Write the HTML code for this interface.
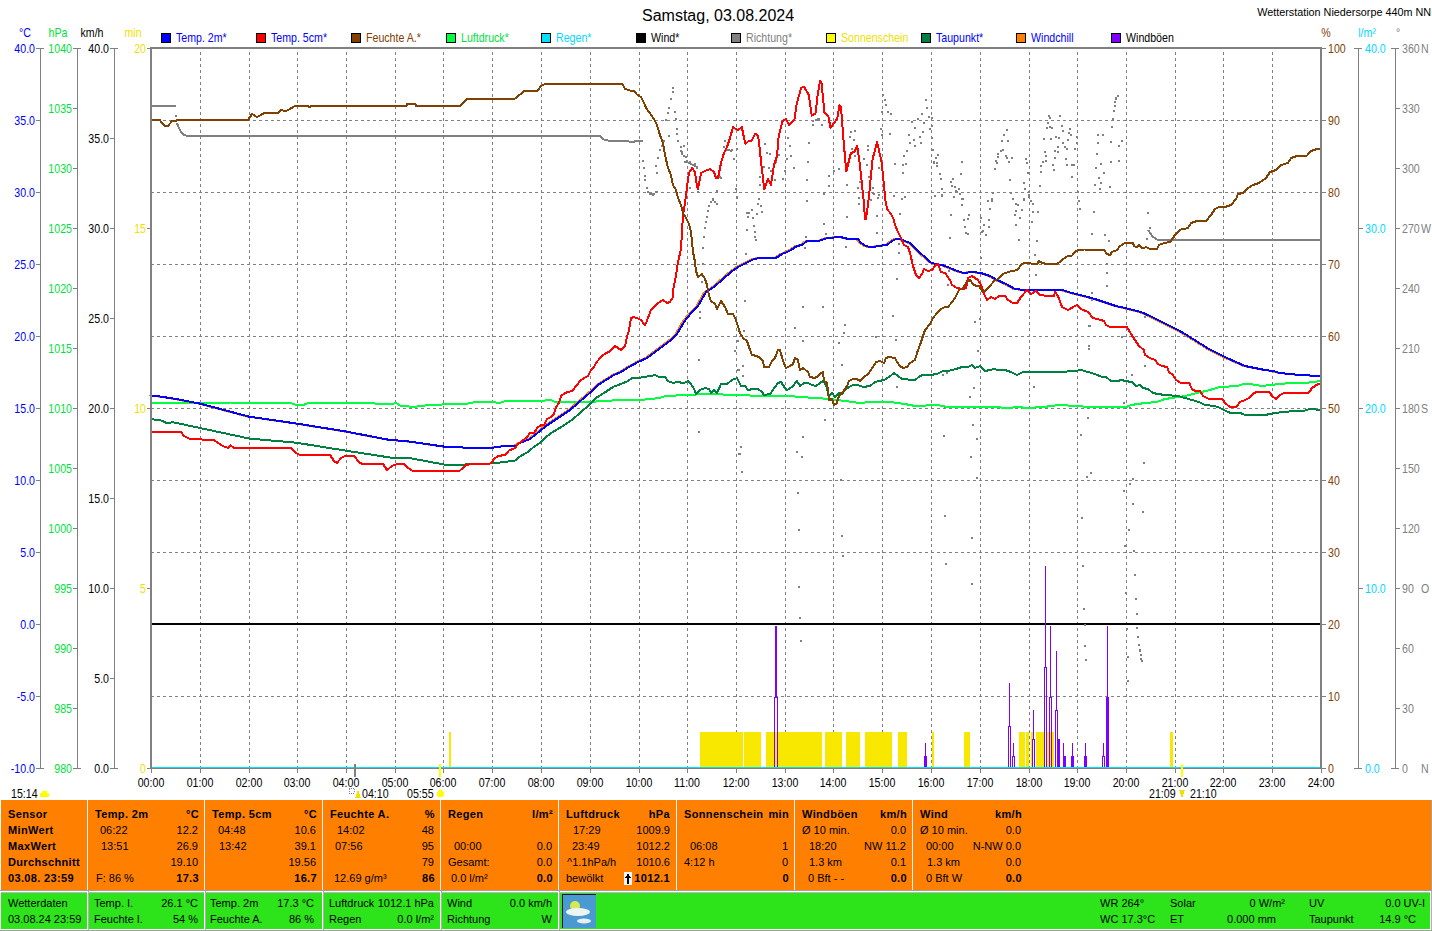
<!DOCTYPE html><html><head><meta charset="utf-8"><style>html,body{margin:0;padding:0;background:#fff;overflow:hidden}svg{display:block}text{font-family:"Liberation Sans", sans-serif;white-space:pre}</style></head><body>
<svg width="1432" height="931" viewBox="0 0 1432 931" shape-rendering="crispEdges">
<rect x="0" y="0" width="1432" height="931" fill="#fff"/>
<text x="642" y="21" font-size="16" fill="#000" text-anchor="start" font-weight="normal">Samstag, 03.08.2024</text>
<text x="1431" y="16" font-size="10.8" fill="#000" text-anchor="end" font-weight="normal">Wetterstation Niedersorpe 440m NN</text>
<rect x="161.5" y="33.5" width="9" height="9" fill="#0000ff" stroke="#000" stroke-width="1"/>
<text transform="translate(176,42) scale(0.85,1.0)" font-size="12.5" fill="#0000ff" text-anchor="start" font-weight="normal">Temp. 2m*</text>
<rect x="256.5" y="33.5" width="9" height="9" fill="#ff0000" stroke="#000" stroke-width="1"/>
<text transform="translate(271,42) scale(0.85,1.0)" font-size="12.5" fill="#0000ff" text-anchor="start" font-weight="normal">Temp. 5cm*</text>
<rect x="351.5" y="33.5" width="9" height="9" fill="#804000" stroke="#000" stroke-width="1"/>
<text transform="translate(366,42) scale(0.85,1.0)" font-size="12.5" fill="#804000" text-anchor="start" font-weight="normal">Feuchte A.*</text>
<rect x="446.5" y="33.5" width="9" height="9" fill="#00ff40" stroke="#000" stroke-width="1"/>
<text transform="translate(461,42) scale(0.85,1.0)" font-size="12.5" fill="#00e040" text-anchor="start" font-weight="normal">Luftdruck*</text>
<rect x="541.5" y="33.5" width="9" height="9" fill="#00e0ff" stroke="#000" stroke-width="1"/>
<text transform="translate(556,42) scale(0.85,1.0)" font-size="12.5" fill="#00d8ff" text-anchor="start" font-weight="normal">Regen*</text>
<rect x="636.5" y="33.5" width="9" height="9" fill="#000000" stroke="#000" stroke-width="1"/>
<text transform="translate(651,42) scale(0.85,1.0)" font-size="12.5" fill="#000000" text-anchor="start" font-weight="normal">Wind*</text>
<rect x="731.5" y="33.5" width="9" height="9" fill="#808080" stroke="#000" stroke-width="1"/>
<text transform="translate(746,42) scale(0.85,1.0)" font-size="12.5" fill="#808080" text-anchor="start" font-weight="normal">Richtung*</text>
<rect x="826.5" y="33.5" width="9" height="9" fill="#ffff00" stroke="#000" stroke-width="1"/>
<text transform="translate(841,42) scale(0.85,1.0)" font-size="12.5" fill="#f0e000" text-anchor="start" font-weight="normal">Sonnenschein</text>
<rect x="921.5" y="33.5" width="9" height="9" fill="#008040" stroke="#000" stroke-width="1"/>
<text transform="translate(936,42) scale(0.85,1.0)" font-size="12.5" fill="#0000ff" text-anchor="start" font-weight="normal">Taupunkt*</text>
<rect x="1016.5" y="33.5" width="9" height="9" fill="#ff8000" stroke="#000" stroke-width="1"/>
<text transform="translate(1031,42) scale(0.85,1.0)" font-size="12.5" fill="#0000ff" text-anchor="start" font-weight="normal">Windchill</text>
<rect x="1111.5" y="33.5" width="9" height="9" fill="#8000ff" stroke="#000" stroke-width="1"/>
<text transform="translate(1126,42) scale(0.85,1.0)" font-size="12.5" fill="#000000" text-anchor="start" font-weight="normal">Windböen</text>
<text transform="translate(25,37) scale(0.85,1.0)" font-size="12.5" fill="#0000ff" text-anchor="middle" font-weight="normal">°C</text>
<text transform="translate(58,37) scale(0.85,1.0)" font-size="12.5" fill="#00e040" text-anchor="middle" font-weight="normal">hPa</text>
<text transform="translate(92,37) scale(0.85,1.0)" font-size="12.5" fill="#000" text-anchor="middle" font-weight="normal">km/h</text>
<text transform="translate(133,37) scale(0.85,1.0)" font-size="12.5" fill="#f0e000" text-anchor="middle" font-weight="normal">min</text>
<text transform="translate(1326,37) scale(0.85,1.0)" font-size="12.5" fill="#804000" text-anchor="middle" font-weight="normal">%</text>
<text transform="translate(1367,37) scale(0.85,1.0)" font-size="12.5" fill="#00d8ff" text-anchor="middle" font-weight="normal">l/m²</text>
<text transform="translate(1398,37) scale(0.85,1.0)" font-size="12.5" fill="#808080" text-anchor="middle" font-weight="normal">°</text>
<rect x="40" y="48" width="1" height="721" fill="#808080"/>
<rect x="77" y="48" width="1" height="721" fill="#808080"/>
<rect x="114" y="48" width="1" height="721" fill="#808080"/>
<rect x="1358" y="48" width="1" height="721" fill="#808080"/>
<rect x="1395" y="48" width="1" height="721" fill="#808080"/>
<rect x="36" y="48" width="8" height="1" fill="#808080"/>
<text transform="translate(35,53) scale(0.85,1.0)" font-size="12.5" fill="#0000ff" text-anchor="end" font-weight="normal">40.0</text>
<rect x="36" y="120" width="4" height="1" fill="#808080"/>
<text transform="translate(35,125) scale(0.85,1.0)" font-size="12.5" fill="#0000ff" text-anchor="end" font-weight="normal">35.0</text>
<rect x="36" y="192" width="4" height="1" fill="#808080"/>
<text transform="translate(35,197) scale(0.85,1.0)" font-size="12.5" fill="#0000ff" text-anchor="end" font-weight="normal">30.0</text>
<rect x="36" y="264" width="4" height="1" fill="#808080"/>
<text transform="translate(35,269) scale(0.85,1.0)" font-size="12.5" fill="#0000ff" text-anchor="end" font-weight="normal">25.0</text>
<rect x="36" y="336" width="4" height="1" fill="#808080"/>
<text transform="translate(35,341) scale(0.85,1.0)" font-size="12.5" fill="#0000ff" text-anchor="end" font-weight="normal">20.0</text>
<rect x="36" y="408" width="4" height="1" fill="#808080"/>
<text transform="translate(35,413) scale(0.85,1.0)" font-size="12.5" fill="#0000ff" text-anchor="end" font-weight="normal">15.0</text>
<rect x="36" y="480" width="4" height="1" fill="#808080"/>
<text transform="translate(35,485) scale(0.85,1.0)" font-size="12.5" fill="#0000ff" text-anchor="end" font-weight="normal">10.0</text>
<rect x="36" y="552" width="4" height="1" fill="#808080"/>
<text transform="translate(35,557) scale(0.85,1.0)" font-size="12.5" fill="#0000ff" text-anchor="end" font-weight="normal">5.0</text>
<rect x="36" y="624" width="4" height="1" fill="#808080"/>
<text transform="translate(35,629) scale(0.85,1.0)" font-size="12.5" fill="#0000ff" text-anchor="end" font-weight="normal">0.0</text>
<rect x="36" y="696" width="4" height="1" fill="#808080"/>
<text transform="translate(35,701) scale(0.85,1.0)" font-size="12.5" fill="#0000ff" text-anchor="end" font-weight="normal">-5.0</text>
<rect x="36" y="768" width="8" height="1" fill="#808080"/>
<text transform="translate(35,773) scale(0.85,1.0)" font-size="12.5" fill="#0000ff" text-anchor="end" font-weight="normal">-10.0</text>
<rect x="73" y="48" width="8" height="1" fill="#808080"/>
<text transform="translate(72,53) scale(0.85,1.0)" font-size="12.5" fill="#00e040" text-anchor="end" font-weight="normal">1040</text>
<rect x="73" y="108" width="4" height="1" fill="#808080"/>
<text transform="translate(72,113) scale(0.85,1.0)" font-size="12.5" fill="#00e040" text-anchor="end" font-weight="normal">1035</text>
<rect x="73" y="168" width="4" height="1" fill="#808080"/>
<text transform="translate(72,173) scale(0.85,1.0)" font-size="12.5" fill="#00e040" text-anchor="end" font-weight="normal">1030</text>
<rect x="73" y="228" width="4" height="1" fill="#808080"/>
<text transform="translate(72,233) scale(0.85,1.0)" font-size="12.5" fill="#00e040" text-anchor="end" font-weight="normal">1025</text>
<rect x="73" y="288" width="4" height="1" fill="#808080"/>
<text transform="translate(72,293) scale(0.85,1.0)" font-size="12.5" fill="#00e040" text-anchor="end" font-weight="normal">1020</text>
<rect x="73" y="348" width="4" height="1" fill="#808080"/>
<text transform="translate(72,353) scale(0.85,1.0)" font-size="12.5" fill="#00e040" text-anchor="end" font-weight="normal">1015</text>
<rect x="73" y="408" width="4" height="1" fill="#808080"/>
<text transform="translate(72,413) scale(0.85,1.0)" font-size="12.5" fill="#00e040" text-anchor="end" font-weight="normal">1010</text>
<rect x="73" y="468" width="4" height="1" fill="#808080"/>
<text transform="translate(72,473) scale(0.85,1.0)" font-size="12.5" fill="#00e040" text-anchor="end" font-weight="normal">1005</text>
<rect x="73" y="528" width="4" height="1" fill="#808080"/>
<text transform="translate(72,533) scale(0.85,1.0)" font-size="12.5" fill="#00e040" text-anchor="end" font-weight="normal">1000</text>
<rect x="73" y="588" width="4" height="1" fill="#808080"/>
<text transform="translate(72,593) scale(0.85,1.0)" font-size="12.5" fill="#00e040" text-anchor="end" font-weight="normal">995</text>
<rect x="73" y="648" width="4" height="1" fill="#808080"/>
<text transform="translate(72,653) scale(0.85,1.0)" font-size="12.5" fill="#00e040" text-anchor="end" font-weight="normal">990</text>
<rect x="73" y="708" width="4" height="1" fill="#808080"/>
<text transform="translate(72,713) scale(0.85,1.0)" font-size="12.5" fill="#00e040" text-anchor="end" font-weight="normal">985</text>
<rect x="73" y="768" width="8" height="1" fill="#808080"/>
<text transform="translate(72,773) scale(0.85,1.0)" font-size="12.5" fill="#00e040" text-anchor="end" font-weight="normal">980</text>
<rect x="110" y="48" width="8" height="1" fill="#808080"/>
<text transform="translate(109,53) scale(0.85,1.0)" font-size="12.5" fill="#000" text-anchor="end" font-weight="normal">40.0</text>
<rect x="110" y="138" width="4" height="1" fill="#808080"/>
<text transform="translate(109,143) scale(0.85,1.0)" font-size="12.5" fill="#000" text-anchor="end" font-weight="normal">35.0</text>
<rect x="110" y="228" width="4" height="1" fill="#808080"/>
<text transform="translate(109,233) scale(0.85,1.0)" font-size="12.5" fill="#000" text-anchor="end" font-weight="normal">30.0</text>
<rect x="110" y="318" width="4" height="1" fill="#808080"/>
<text transform="translate(109,323) scale(0.85,1.0)" font-size="12.5" fill="#000" text-anchor="end" font-weight="normal">25.0</text>
<rect x="110" y="408" width="4" height="1" fill="#808080"/>
<text transform="translate(109,413) scale(0.85,1.0)" font-size="12.5" fill="#000" text-anchor="end" font-weight="normal">20.0</text>
<rect x="110" y="498" width="4" height="1" fill="#808080"/>
<text transform="translate(109,503) scale(0.85,1.0)" font-size="12.5" fill="#000" text-anchor="end" font-weight="normal">15.0</text>
<rect x="110" y="588" width="4" height="1" fill="#808080"/>
<text transform="translate(109,593) scale(0.85,1.0)" font-size="12.5" fill="#000" text-anchor="end" font-weight="normal">10.0</text>
<rect x="110" y="678" width="4" height="1" fill="#808080"/>
<text transform="translate(109,683) scale(0.85,1.0)" font-size="12.5" fill="#000" text-anchor="end" font-weight="normal">5.0</text>
<rect x="110" y="768" width="8" height="1" fill="#808080"/>
<text transform="translate(109,773) scale(0.85,1.0)" font-size="12.5" fill="#000" text-anchor="end" font-weight="normal">0.0</text>
<rect x="147" y="48" width="4" height="1" fill="#808080"/>
<text transform="translate(146,53) scale(0.85,1.0)" font-size="12.5" fill="#f0e000" text-anchor="end" font-weight="normal">20</text>
<rect x="147" y="228" width="4" height="1" fill="#808080"/>
<text transform="translate(146,233) scale(0.85,1.0)" font-size="12.5" fill="#f0e000" text-anchor="end" font-weight="normal">15</text>
<rect x="147" y="408" width="4" height="1" fill="#808080"/>
<text transform="translate(146,413) scale(0.85,1.0)" font-size="12.5" fill="#f0e000" text-anchor="end" font-weight="normal">10</text>
<rect x="147" y="588" width="4" height="1" fill="#808080"/>
<text transform="translate(146,593) scale(0.85,1.0)" font-size="12.5" fill="#f0e000" text-anchor="end" font-weight="normal">5</text>
<rect x="147" y="768" width="4" height="1" fill="#808080"/>
<text transform="translate(146,773) scale(0.85,1.0)" font-size="12.5" fill="#f0e000" text-anchor="end" font-weight="normal">0</text>
<rect x="1321" y="48" width="5" height="1" fill="#808080"/>
<text transform="translate(1328,53) scale(0.85,1.0)" font-size="12.5" fill="#804000" text-anchor="start" font-weight="normal">100</text>
<rect x="1321" y="120" width="5" height="1" fill="#808080"/>
<text transform="translate(1328,125) scale(0.85,1.0)" font-size="12.5" fill="#804000" text-anchor="start" font-weight="normal">90</text>
<rect x="1321" y="192" width="5" height="1" fill="#808080"/>
<text transform="translate(1328,197) scale(0.85,1.0)" font-size="12.5" fill="#804000" text-anchor="start" font-weight="normal">80</text>
<rect x="1321" y="264" width="5" height="1" fill="#808080"/>
<text transform="translate(1328,269) scale(0.85,1.0)" font-size="12.5" fill="#804000" text-anchor="start" font-weight="normal">70</text>
<rect x="1321" y="336" width="5" height="1" fill="#808080"/>
<text transform="translate(1328,341) scale(0.85,1.0)" font-size="12.5" fill="#804000" text-anchor="start" font-weight="normal">60</text>
<rect x="1321" y="408" width="5" height="1" fill="#808080"/>
<text transform="translate(1328,413) scale(0.85,1.0)" font-size="12.5" fill="#804000" text-anchor="start" font-weight="normal">50</text>
<rect x="1321" y="480" width="5" height="1" fill="#808080"/>
<text transform="translate(1328,485) scale(0.85,1.0)" font-size="12.5" fill="#804000" text-anchor="start" font-weight="normal">40</text>
<rect x="1321" y="552" width="5" height="1" fill="#808080"/>
<text transform="translate(1328,557) scale(0.85,1.0)" font-size="12.5" fill="#804000" text-anchor="start" font-weight="normal">30</text>
<rect x="1321" y="624" width="5" height="1" fill="#808080"/>
<text transform="translate(1328,629) scale(0.85,1.0)" font-size="12.5" fill="#804000" text-anchor="start" font-weight="normal">20</text>
<rect x="1321" y="696" width="5" height="1" fill="#808080"/>
<text transform="translate(1328,701) scale(0.85,1.0)" font-size="12.5" fill="#804000" text-anchor="start" font-weight="normal">10</text>
<rect x="1321" y="768" width="5" height="1" fill="#808080"/>
<text transform="translate(1328,773) scale(0.85,1.0)" font-size="12.5" fill="#804000" text-anchor="start" font-weight="normal">0</text>
<rect x="1354" y="48" width="8" height="1" fill="#808080"/>
<text transform="translate(1365,53) scale(0.85,1.0)" font-size="12.5" fill="#00d8ff" text-anchor="start" font-weight="normal">40.0</text>
<rect x="1359" y="228" width="4" height="1" fill="#808080"/>
<text transform="translate(1365,233) scale(0.85,1.0)" font-size="12.5" fill="#00d8ff" text-anchor="start" font-weight="normal">30.0</text>
<rect x="1359" y="408" width="4" height="1" fill="#808080"/>
<text transform="translate(1365,413) scale(0.85,1.0)" font-size="12.5" fill="#00d8ff" text-anchor="start" font-weight="normal">20.0</text>
<rect x="1359" y="588" width="4" height="1" fill="#808080"/>
<text transform="translate(1365,593) scale(0.85,1.0)" font-size="12.5" fill="#00d8ff" text-anchor="start" font-weight="normal">10.0</text>
<rect x="1354" y="768" width="8" height="1" fill="#808080"/>
<text transform="translate(1365,773) scale(0.85,1.0)" font-size="12.5" fill="#00d8ff" text-anchor="start" font-weight="normal">0.0</text>
<rect x="1391" y="48" width="8" height="1" fill="#808080"/>
<text transform="translate(1402,53) scale(0.85,1.0)" font-size="12.5" fill="#808080" text-anchor="start" font-weight="normal">360</text>
<text transform="translate(1421,53) scale(0.85,1.0)" font-size="12.5" fill="#808080" text-anchor="start" font-weight="normal">N</text>
<rect x="1396" y="108" width="4" height="1" fill="#808080"/>
<text transform="translate(1402,113) scale(0.85,1.0)" font-size="12.5" fill="#808080" text-anchor="start" font-weight="normal">330</text>
<rect x="1396" y="168" width="4" height="1" fill="#808080"/>
<text transform="translate(1402,173) scale(0.85,1.0)" font-size="12.5" fill="#808080" text-anchor="start" font-weight="normal">300</text>
<rect x="1396" y="228" width="4" height="1" fill="#808080"/>
<text transform="translate(1402,233) scale(0.85,1.0)" font-size="12.5" fill="#808080" text-anchor="start" font-weight="normal">270</text>
<text transform="translate(1421,233) scale(0.85,1.0)" font-size="12.5" fill="#808080" text-anchor="start" font-weight="normal">W</text>
<rect x="1396" y="288" width="4" height="1" fill="#808080"/>
<text transform="translate(1402,293) scale(0.85,1.0)" font-size="12.5" fill="#808080" text-anchor="start" font-weight="normal">240</text>
<rect x="1396" y="348" width="4" height="1" fill="#808080"/>
<text transform="translate(1402,353) scale(0.85,1.0)" font-size="12.5" fill="#808080" text-anchor="start" font-weight="normal">210</text>
<rect x="1396" y="408" width="4" height="1" fill="#808080"/>
<text transform="translate(1402,413) scale(0.85,1.0)" font-size="12.5" fill="#808080" text-anchor="start" font-weight="normal">180</text>
<text transform="translate(1421,413) scale(0.85,1.0)" font-size="12.5" fill="#808080" text-anchor="start" font-weight="normal">S</text>
<rect x="1396" y="468" width="4" height="1" fill="#808080"/>
<text transform="translate(1402,473) scale(0.85,1.0)" font-size="12.5" fill="#808080" text-anchor="start" font-weight="normal">150</text>
<rect x="1396" y="528" width="4" height="1" fill="#808080"/>
<text transform="translate(1402,533) scale(0.85,1.0)" font-size="12.5" fill="#808080" text-anchor="start" font-weight="normal">120</text>
<rect x="1396" y="588" width="4" height="1" fill="#808080"/>
<text transform="translate(1402,593) scale(0.85,1.0)" font-size="12.5" fill="#808080" text-anchor="start" font-weight="normal">90</text>
<text transform="translate(1421,593) scale(0.85,1.0)" font-size="12.5" fill="#808080" text-anchor="start" font-weight="normal">O</text>
<rect x="1396" y="648" width="4" height="1" fill="#808080"/>
<text transform="translate(1402,653) scale(0.85,1.0)" font-size="12.5" fill="#808080" text-anchor="start" font-weight="normal">60</text>
<rect x="1396" y="708" width="4" height="1" fill="#808080"/>
<text transform="translate(1402,713) scale(0.85,1.0)" font-size="12.5" fill="#808080" text-anchor="start" font-weight="normal">30</text>
<rect x="1391" y="768" width="8" height="1" fill="#808080"/>
<text transform="translate(1402,773) scale(0.85,1.0)" font-size="12.5" fill="#808080" text-anchor="start" font-weight="normal">0</text>
<text transform="translate(1421,773) scale(0.85,1.0)" font-size="12.5" fill="#808080" text-anchor="start" font-weight="normal">N</text>
<line x1="200.5" y1="48" x2="200.5" y2="768" stroke="#808080" stroke-width="1" stroke-dasharray="3 3" stroke-dashoffset="2"/>
<rect x="200" y="769" width="1" height="4" fill="#808080"/>
<line x1="249.5" y1="48" x2="249.5" y2="768" stroke="#808080" stroke-width="1" stroke-dasharray="3 3" stroke-dashoffset="2"/>
<rect x="249" y="769" width="1" height="4" fill="#808080"/>
<line x1="297.5" y1="48" x2="297.5" y2="768" stroke="#808080" stroke-width="1" stroke-dasharray="3 3" stroke-dashoffset="2"/>
<rect x="297" y="769" width="1" height="4" fill="#808080"/>
<line x1="346.5" y1="48" x2="346.5" y2="768" stroke="#808080" stroke-width="1" stroke-dasharray="3 3" stroke-dashoffset="2"/>
<rect x="346" y="769" width="1" height="4" fill="#808080"/>
<line x1="395.5" y1="48" x2="395.5" y2="768" stroke="#808080" stroke-width="1" stroke-dasharray="3 3" stroke-dashoffset="2"/>
<rect x="395" y="769" width="1" height="4" fill="#808080"/>
<line x1="443.5" y1="48" x2="443.5" y2="768" stroke="#808080" stroke-width="1" stroke-dasharray="3 3" stroke-dashoffset="2"/>
<rect x="443" y="769" width="1" height="4" fill="#808080"/>
<line x1="492.5" y1="48" x2="492.5" y2="768" stroke="#808080" stroke-width="1" stroke-dasharray="3 3" stroke-dashoffset="2"/>
<rect x="492" y="769" width="1" height="4" fill="#808080"/>
<line x1="541.5" y1="48" x2="541.5" y2="768" stroke="#808080" stroke-width="1" stroke-dasharray="3 3" stroke-dashoffset="2"/>
<rect x="541" y="769" width="1" height="4" fill="#808080"/>
<line x1="590.5" y1="48" x2="590.5" y2="768" stroke="#808080" stroke-width="1" stroke-dasharray="3 3" stroke-dashoffset="2"/>
<rect x="590" y="769" width="1" height="4" fill="#808080"/>
<line x1="639.5" y1="48" x2="639.5" y2="768" stroke="#808080" stroke-width="1" stroke-dasharray="3 3" stroke-dashoffset="2"/>
<rect x="639" y="769" width="1" height="4" fill="#808080"/>
<line x1="687.5" y1="48" x2="687.5" y2="768" stroke="#808080" stroke-width="1" stroke-dasharray="3 3" stroke-dashoffset="2"/>
<rect x="687" y="769" width="1" height="4" fill="#808080"/>
<line x1="736.5" y1="48" x2="736.5" y2="768" stroke="#808080" stroke-width="1" stroke-dasharray="3 3" stroke-dashoffset="2"/>
<rect x="736" y="769" width="1" height="4" fill="#808080"/>
<line x1="785.5" y1="48" x2="785.5" y2="768" stroke="#808080" stroke-width="1" stroke-dasharray="3 3" stroke-dashoffset="2"/>
<rect x="785" y="769" width="1" height="4" fill="#808080"/>
<line x1="833.5" y1="48" x2="833.5" y2="768" stroke="#808080" stroke-width="1" stroke-dasharray="3 3" stroke-dashoffset="2"/>
<rect x="833" y="769" width="1" height="4" fill="#808080"/>
<line x1="882.5" y1="48" x2="882.5" y2="768" stroke="#808080" stroke-width="1" stroke-dasharray="3 3" stroke-dashoffset="2"/>
<rect x="882" y="769" width="1" height="4" fill="#808080"/>
<line x1="931.5" y1="48" x2="931.5" y2="768" stroke="#808080" stroke-width="1" stroke-dasharray="3 3" stroke-dashoffset="2"/>
<rect x="931" y="769" width="1" height="4" fill="#808080"/>
<line x1="980.5" y1="48" x2="980.5" y2="768" stroke="#808080" stroke-width="1" stroke-dasharray="3 3" stroke-dashoffset="2"/>
<rect x="980" y="769" width="1" height="4" fill="#808080"/>
<line x1="1029.5" y1="48" x2="1029.5" y2="768" stroke="#808080" stroke-width="1" stroke-dasharray="3 3" stroke-dashoffset="2"/>
<rect x="1029" y="769" width="1" height="4" fill="#808080"/>
<line x1="1077.5" y1="48" x2="1077.5" y2="768" stroke="#808080" stroke-width="1" stroke-dasharray="3 3" stroke-dashoffset="2"/>
<rect x="1077" y="769" width="1" height="4" fill="#808080"/>
<line x1="1126.5" y1="48" x2="1126.5" y2="768" stroke="#808080" stroke-width="1" stroke-dasharray="3 3" stroke-dashoffset="2"/>
<rect x="1126" y="769" width="1" height="4" fill="#808080"/>
<line x1="1175.5" y1="48" x2="1175.5" y2="768" stroke="#808080" stroke-width="1" stroke-dasharray="3 3" stroke-dashoffset="2"/>
<rect x="1175" y="769" width="1" height="4" fill="#808080"/>
<line x1="1223.5" y1="48" x2="1223.5" y2="768" stroke="#808080" stroke-width="1" stroke-dasharray="3 3" stroke-dashoffset="2"/>
<rect x="1223" y="769" width="1" height="4" fill="#808080"/>
<line x1="1272.5" y1="48" x2="1272.5" y2="768" stroke="#808080" stroke-width="1" stroke-dasharray="3 3" stroke-dashoffset="2"/>
<rect x="1272" y="769" width="1" height="4" fill="#808080"/>
<line x1="151" y1="120.5" x2="1321" y2="120.5" stroke="#808080" stroke-width="1" stroke-dasharray="3 3"/>
<line x1="151" y1="192.5" x2="1321" y2="192.5" stroke="#808080" stroke-width="1" stroke-dasharray="3 3"/>
<line x1="151" y1="264.5" x2="1321" y2="264.5" stroke="#808080" stroke-width="1" stroke-dasharray="3 3"/>
<line x1="151" y1="336.5" x2="1321" y2="336.5" stroke="#808080" stroke-width="1" stroke-dasharray="3 3"/>
<line x1="151" y1="408.5" x2="1321" y2="408.5" stroke="#808080" stroke-width="1" stroke-dasharray="3 3"/>
<line x1="151" y1="480.5" x2="1321" y2="480.5" stroke="#808080" stroke-width="1" stroke-dasharray="3 3"/>
<line x1="151" y1="552.5" x2="1321" y2="552.5" stroke="#808080" stroke-width="1" stroke-dasharray="3 3"/>
<line x1="151" y1="624.5" x2="1321" y2="624.5" stroke="#808080" stroke-width="1" stroke-dasharray="3 3"/>
<line x1="151" y1="696.5" x2="1321" y2="696.5" stroke="#808080" stroke-width="1" stroke-dasharray="3 3"/>
<text transform="translate(151,787) scale(0.85,1.0)" font-size="12.5" fill="#000" text-anchor="middle" font-weight="normal">00:00</text>
<text transform="translate(200,787) scale(0.85,1.0)" font-size="12.5" fill="#000" text-anchor="middle" font-weight="normal">01:00</text>
<text transform="translate(249,787) scale(0.85,1.0)" font-size="12.5" fill="#000" text-anchor="middle" font-weight="normal">02:00</text>
<text transform="translate(297,787) scale(0.85,1.0)" font-size="12.5" fill="#000" text-anchor="middle" font-weight="normal">03:00</text>
<text transform="translate(346,787) scale(0.85,1.0)" font-size="12.5" fill="#000" text-anchor="middle" font-weight="normal">04:00</text>
<text transform="translate(395,787) scale(0.85,1.0)" font-size="12.5" fill="#000" text-anchor="middle" font-weight="normal">05:00</text>
<text transform="translate(443,787) scale(0.85,1.0)" font-size="12.5" fill="#000" text-anchor="middle" font-weight="normal">06:00</text>
<text transform="translate(492,787) scale(0.85,1.0)" font-size="12.5" fill="#000" text-anchor="middle" font-weight="normal">07:00</text>
<text transform="translate(541,787) scale(0.85,1.0)" font-size="12.5" fill="#000" text-anchor="middle" font-weight="normal">08:00</text>
<text transform="translate(590,787) scale(0.85,1.0)" font-size="12.5" fill="#000" text-anchor="middle" font-weight="normal">09:00</text>
<text transform="translate(639,787) scale(0.85,1.0)" font-size="12.5" fill="#000" text-anchor="middle" font-weight="normal">10:00</text>
<text transform="translate(687,787) scale(0.85,1.0)" font-size="12.5" fill="#000" text-anchor="middle" font-weight="normal">11:00</text>
<text transform="translate(736,787) scale(0.85,1.0)" font-size="12.5" fill="#000" text-anchor="middle" font-weight="normal">12:00</text>
<text transform="translate(785,787) scale(0.85,1.0)" font-size="12.5" fill="#000" text-anchor="middle" font-weight="normal">13:00</text>
<text transform="translate(833,787) scale(0.85,1.0)" font-size="12.5" fill="#000" text-anchor="middle" font-weight="normal">14:00</text>
<text transform="translate(882,787) scale(0.85,1.0)" font-size="12.5" fill="#000" text-anchor="middle" font-weight="normal">15:00</text>
<text transform="translate(931,787) scale(0.85,1.0)" font-size="12.5" fill="#000" text-anchor="middle" font-weight="normal">16:00</text>
<text transform="translate(980,787) scale(0.85,1.0)" font-size="12.5" fill="#000" text-anchor="middle" font-weight="normal">17:00</text>
<text transform="translate(1029,787) scale(0.85,1.0)" font-size="12.5" fill="#000" text-anchor="middle" font-weight="normal">18:00</text>
<text transform="translate(1077,787) scale(0.85,1.0)" font-size="12.5" fill="#000" text-anchor="middle" font-weight="normal">19:00</text>
<text transform="translate(1126,787) scale(0.85,1.0)" font-size="12.5" fill="#000" text-anchor="middle" font-weight="normal">20:00</text>
<text transform="translate(1175,787) scale(0.85,1.0)" font-size="12.5" fill="#000" text-anchor="middle" font-weight="normal">21:00</text>
<text transform="translate(1223,787) scale(0.85,1.0)" font-size="12.5" fill="#000" text-anchor="middle" font-weight="normal">22:00</text>
<text transform="translate(1272,787) scale(0.85,1.0)" font-size="12.5" fill="#000" text-anchor="middle" font-weight="normal">23:00</text>
<text transform="translate(1321,787) scale(0.85,1.0)" font-size="12.5" fill="#000" text-anchor="middle" font-weight="normal">24:00</text>
<rect x="151" y="769" width="1" height="4" fill="#808080"/>
<rect x="1321" y="769" width="1" height="4" fill="#808080"/>
<rect x="151" y="623" width="1170" height="2" fill="#000"/>
<rect x="449" y="732" width="2" height="35" fill="#f8e800"/>
<rect x="700" y="732" width="43" height="35" fill="#f8e800"/>
<rect x="744" y="732" width="17" height="35" fill="#f8e800"/>
<rect x="766" y="732" width="56" height="35" fill="#f8e800"/>
<rect x="825" y="732" width="17" height="35" fill="#f8e800"/>
<rect x="846" y="732" width="14" height="35" fill="#f8e800"/>
<rect x="865" y="732" width="27" height="35" fill="#f8e800"/>
<rect x="898" y="732" width="9" height="35" fill="#f8e800"/>
<rect x="932" y="732" width="2" height="35" fill="#f8e800"/>
<rect x="964" y="732" width="6" height="35" fill="#f8e800"/>
<rect x="1019" y="732" width="6" height="35" fill="#f8e800"/>
<rect x="1026" y="732" width="3" height="35" fill="#f8e800"/>
<rect x="1031" y="732" width="2" height="35" fill="#f8e800"/>
<rect x="1036" y="732" width="8" height="35" fill="#f8e800"/>
<rect x="1047" y="732" width="7" height="35" fill="#f8e800"/>
<rect x="1170" y="732" width="3" height="35" fill="#f8e800"/>
<rect x="775" y="626" width="2" height="71" fill="#8000ff"/>
<rect x="925" y="743" width="1" height="13" fill="#8000ff"/>
<rect x="1009" y="683" width="1" height="43" fill="#8000ff"/>
<rect x="1013" y="743" width="1" height="13" fill="#8000ff"/>
<rect x="1033" y="710" width="1" height="29" fill="#8000ff"/>
<rect x="1045" y="566" width="1" height="101" fill="#8000ff"/>
<rect x="1050" y="626" width="1" height="71" fill="#8000ff"/>
<rect x="1056" y="651" width="1" height="59" fill="#8000ff"/>
<rect x="1063" y="743" width="1" height="13" fill="#8000ff"/>
<rect x="1072" y="743" width="1" height="13" fill="#8000ff"/>
<rect x="1085" y="743" width="1" height="13" fill="#8000ff"/>
<rect x="1103" y="743" width="1" height="13" fill="#8000ff"/>
<rect x="1107" y="626" width="1" height="71" fill="#8000ff"/>
<rect x="774" y="697" width="1" height="70" fill="#8000ff"/>
<rect x="777" y="697" width="1" height="70" fill="#8000ff"/>
<rect x="774" y="697" width="4" height="1" fill="#8000ff"/>
<rect x="1008" y="726" width="1" height="41" fill="#8000ff"/>
<rect x="1010" y="726" width="1" height="41" fill="#8000ff"/>
<rect x="1008" y="726" width="3" height="1" fill="#8000ff"/>
<rect x="1012" y="756" width="1" height="11" fill="#8000ff"/>
<rect x="1014" y="756" width="1" height="11" fill="#8000ff"/>
<rect x="1012" y="756" width="3" height="1" fill="#8000ff"/>
<rect x="1032" y="739" width="1" height="28" fill="#8000ff"/>
<rect x="1034" y="739" width="1" height="28" fill="#8000ff"/>
<rect x="1032" y="739" width="3" height="1" fill="#8000ff"/>
<rect x="1044" y="667" width="1" height="100" fill="#8000ff"/>
<rect x="1046" y="667" width="1" height="100" fill="#8000ff"/>
<rect x="1044" y="667" width="3" height="1" fill="#8000ff"/>
<rect x="1049" y="697" width="1" height="70" fill="#8000ff"/>
<rect x="1051" y="697" width="1" height="70" fill="#8000ff"/>
<rect x="1049" y="697" width="3" height="1" fill="#8000ff"/>
<rect x="1055" y="710" width="1" height="57" fill="#8000ff"/>
<rect x="1057" y="710" width="1" height="57" fill="#8000ff"/>
<rect x="1055" y="710" width="3" height="1" fill="#8000ff"/>
<rect x="1102" y="756" width="1" height="11" fill="#8000ff"/>
<rect x="1104" y="756" width="1" height="11" fill="#8000ff"/>
<rect x="1102" y="756" width="3" height="1" fill="#8000ff"/>
<rect x="924" y="756" width="3" height="11" fill="#8000ff"/>
<rect x="1057" y="739" width="3" height="28" fill="#8000ff"/>
<rect x="1063" y="756" width="3" height="11" fill="#8000ff"/>
<rect x="1071" y="756" width="3" height="11" fill="#8000ff"/>
<rect x="1084" y="756" width="3" height="11" fill="#8000ff"/>
<rect x="1106" y="697" width="3" height="70" fill="#8000ff"/>
<rect x="642" y="160" width="2" height="2" fill="#808080"/>
<rect x="643" y="167" width="2" height="2" fill="#808080"/>
<rect x="644" y="175" width="2" height="2" fill="#808080"/>
<rect x="644" y="179" width="2" height="2" fill="#808080"/>
<rect x="646" y="187" width="2" height="2" fill="#808080"/>
<rect x="649" y="192" width="2" height="2" fill="#808080"/>
<rect x="652" y="194" width="2" height="2" fill="#808080"/>
<rect x="656" y="191" width="2" height="2" fill="#808080"/>
<rect x="656" y="172" width="2" height="2" fill="#808080"/>
<rect x="655" y="165" width="2" height="2" fill="#808080"/>
<rect x="657" y="157" width="2" height="2" fill="#808080"/>
<rect x="659" y="149" width="2" height="2" fill="#808080"/>
<rect x="661" y="145" width="2" height="2" fill="#808080"/>
<rect x="663" y="140" width="2" height="2" fill="#808080"/>
<rect x="668" y="135" width="2" height="2" fill="#808080"/>
<rect x="665" y="119" width="2" height="2" fill="#808080"/>
<rect x="667" y="112" width="2" height="2" fill="#808080"/>
<rect x="668" y="107" width="2" height="2" fill="#808080"/>
<rect x="670" y="98" width="2" height="2" fill="#808080"/>
<rect x="672" y="91" width="2" height="2" fill="#808080"/>
<rect x="672" y="87" width="2" height="2" fill="#808080"/>
<rect x="674" y="111" width="2" height="2" fill="#808080"/>
<rect x="675" y="118" width="2" height="2" fill="#808080"/>
<rect x="676" y="128" width="2" height="2" fill="#808080"/>
<rect x="676" y="133" width="2" height="2" fill="#808080"/>
<rect x="677" y="140" width="2" height="2" fill="#808080"/>
<rect x="680" y="146" width="2" height="2" fill="#808080"/>
<rect x="683" y="145" width="2" height="2" fill="#808080"/>
<rect x="681" y="151" width="2" height="2" fill="#808080"/>
<rect x="683" y="155" width="2" height="2" fill="#808080"/>
<rect x="686" y="160" width="2" height="2" fill="#808080"/>
<rect x="689" y="161" width="2" height="2" fill="#808080"/>
<rect x="694" y="163" width="2" height="2" fill="#808080"/>
<rect x="696" y="167" width="2" height="2" fill="#808080"/>
<rect x="718" y="176" width="2" height="2" fill="#808080"/>
<rect x="724" y="140" width="2" height="2" fill="#808080"/>
<rect x="723" y="146" width="2" height="2" fill="#808080"/>
<rect x="726" y="149" width="2" height="2" fill="#808080"/>
<rect x="731" y="149" width="2" height="2" fill="#808080"/>
<rect x="736" y="148" width="2" height="2" fill="#808080"/>
<rect x="733" y="158" width="2" height="2" fill="#808080"/>
<rect x="689" y="187" width="2" height="2" fill="#808080"/>
<rect x="697" y="191" width="2" height="2" fill="#808080"/>
<rect x="716" y="190" width="2" height="2" fill="#808080"/>
<rect x="712" y="198" width="2" height="2" fill="#808080"/>
<rect x="735" y="188" width="2" height="2" fill="#808080"/>
<rect x="736" y="196" width="2" height="2" fill="#808080"/>
<rect x="764" y="143" width="2" height="2" fill="#808080"/>
<rect x="766" y="152" width="2" height="2" fill="#808080"/>
<rect x="769" y="153" width="2" height="2" fill="#808080"/>
<rect x="763" y="166" width="2" height="2" fill="#808080"/>
<rect x="768" y="167" width="2" height="2" fill="#808080"/>
<rect x="770" y="170" width="2" height="2" fill="#808080"/>
<rect x="759" y="176" width="2" height="2" fill="#808080"/>
<rect x="759" y="184" width="2" height="2" fill="#808080"/>
<rect x="774" y="179" width="2" height="2" fill="#808080"/>
<rect x="778" y="154" width="2" height="2" fill="#808080"/>
<rect x="775" y="161" width="2" height="2" fill="#808080"/>
<rect x="784" y="170" width="2" height="2" fill="#808080"/>
<rect x="782" y="178" width="2" height="2" fill="#808080"/>
<rect x="787" y="137" width="2" height="2" fill="#808080"/>
<rect x="789" y="145" width="2" height="2" fill="#808080"/>
<rect x="790" y="155" width="2" height="2" fill="#808080"/>
<rect x="793" y="167" width="2" height="2" fill="#808080"/>
<rect x="786" y="158" width="2" height="2" fill="#808080"/>
<rect x="808" y="142" width="2" height="2" fill="#808080"/>
<rect x="807" y="161" width="2" height="2" fill="#808080"/>
<rect x="806" y="179" width="2" height="2" fill="#808080"/>
<rect x="812" y="120" width="2" height="2" fill="#808080"/>
<rect x="817" y="118" width="2" height="2" fill="#808080"/>
<rect x="821" y="124" width="2" height="2" fill="#808080"/>
<rect x="828" y="175" width="2" height="2" fill="#808080"/>
<rect x="833" y="170" width="2" height="2" fill="#808080"/>
<rect x="838" y="168" width="2" height="2" fill="#808080"/>
<rect x="828" y="185" width="2" height="2" fill="#808080"/>
<rect x="823" y="193" width="2" height="2" fill="#808080"/>
<rect x="846" y="184" width="2" height="2" fill="#808080"/>
<rect x="850" y="131" width="2" height="2" fill="#808080"/>
<rect x="854" y="130" width="2" height="2" fill="#808080"/>
<rect x="849" y="136" width="2" height="2" fill="#808080"/>
<rect x="853" y="139" width="2" height="2" fill="#808080"/>
<rect x="851" y="148" width="2" height="2" fill="#808080"/>
<rect x="854" y="155" width="2" height="2" fill="#808080"/>
<rect x="863" y="158" width="2" height="2" fill="#808080"/>
<rect x="866" y="164" width="2" height="2" fill="#808080"/>
<rect x="867" y="145" width="2" height="2" fill="#808080"/>
<rect x="867" y="149" width="2" height="2" fill="#808080"/>
<rect x="868" y="176" width="2" height="2" fill="#808080"/>
<rect x="857" y="187" width="2" height="2" fill="#808080"/>
<rect x="859" y="181" width="2" height="2" fill="#808080"/>
<rect x="872" y="187" width="2" height="2" fill="#808080"/>
<rect x="873" y="193" width="2" height="2" fill="#808080"/>
<rect x="878" y="194" width="2" height="2" fill="#808080"/>
<rect x="880" y="128" width="2" height="2" fill="#808080"/>
<rect x="881" y="134" width="2" height="2" fill="#808080"/>
<rect x="878" y="167" width="2" height="2" fill="#808080"/>
<rect x="882" y="94" width="2" height="2" fill="#808080"/>
<rect x="884" y="99" width="2" height="2" fill="#808080"/>
<rect x="885" y="104" width="2" height="2" fill="#808080"/>
<rect x="887" y="111" width="2" height="2" fill="#808080"/>
<rect x="890" y="113" width="2" height="2" fill="#808080"/>
<rect x="881" y="111" width="2" height="2" fill="#808080"/>
<rect x="889" y="133" width="2" height="2" fill="#808080"/>
<rect x="894" y="163" width="2" height="2" fill="#808080"/>
<rect x="902" y="164" width="2" height="2" fill="#808080"/>
<rect x="902" y="172" width="2" height="2" fill="#808080"/>
<rect x="905" y="163" width="2" height="2" fill="#808080"/>
<rect x="903" y="155" width="2" height="2" fill="#808080"/>
<rect x="906" y="150" width="2" height="2" fill="#808080"/>
<rect x="909" y="142" width="2" height="2" fill="#808080"/>
<rect x="914" y="145" width="2" height="2" fill="#808080"/>
<rect x="913" y="139" width="2" height="2" fill="#808080"/>
<rect x="908" y="134" width="2" height="2" fill="#808080"/>
<rect x="911" y="121" width="2" height="2" fill="#808080"/>
<rect x="914" y="127" width="2" height="2" fill="#808080"/>
<rect x="917" y="118" width="2" height="2" fill="#808080"/>
<rect x="921" y="113" width="2" height="2" fill="#808080"/>
<rect x="919" y="136" width="2" height="2" fill="#808080"/>
<rect x="920" y="142" width="2" height="2" fill="#808080"/>
<rect x="922" y="131" width="2" height="2" fill="#808080"/>
<rect x="925" y="99" width="2" height="2" fill="#808080"/>
<rect x="926" y="107" width="2" height="2" fill="#808080"/>
<rect x="923" y="122" width="2" height="2" fill="#808080"/>
<rect x="928" y="116" width="2" height="2" fill="#808080"/>
<rect x="931" y="125" width="2" height="2" fill="#808080"/>
<rect x="929" y="128" width="2" height="2" fill="#808080"/>
<rect x="933" y="161" width="2" height="2" fill="#808080"/>
<rect x="932" y="149" width="2" height="2" fill="#808080"/>
<rect x="893" y="195" width="2" height="2" fill="#808080"/>
<rect x="904" y="196" width="2" height="2" fill="#808080"/>
<rect x="736" y="148" width="2" height="2" fill="#808080"/>
<rect x="758" y="198" width="2" height="2" fill="#808080"/>
<rect x="812" y="124" width="2" height="2" fill="#808080"/>
<rect x="815" y="119" width="2" height="2" fill="#808080"/>
<rect x="818" y="118" width="2" height="2" fill="#808080"/>
<rect x="931" y="117" width="2" height="2" fill="#808080"/>
<rect x="931" y="125" width="2" height="2" fill="#808080"/>
<rect x="931" y="137" width="2" height="2" fill="#808080"/>
<rect x="931" y="149" width="2" height="2" fill="#808080"/>
<rect x="937" y="154" width="2" height="2" fill="#808080"/>
<rect x="935" y="157" width="2" height="2" fill="#808080"/>
<rect x="933" y="162" width="2" height="2" fill="#808080"/>
<rect x="936" y="162" width="2" height="2" fill="#808080"/>
<rect x="936" y="165" width="2" height="2" fill="#808080"/>
<rect x="939" y="173" width="2" height="2" fill="#808080"/>
<rect x="940" y="178" width="2" height="2" fill="#808080"/>
<rect x="941" y="188" width="2" height="2" fill="#808080"/>
<rect x="941" y="194" width="2" height="2" fill="#808080"/>
<rect x="934" y="195" width="2" height="2" fill="#808080"/>
<rect x="952" y="178" width="2" height="2" fill="#808080"/>
<rect x="950" y="181" width="2" height="2" fill="#808080"/>
<rect x="951" y="185" width="2" height="2" fill="#808080"/>
<rect x="954" y="186" width="2" height="2" fill="#808080"/>
<rect x="955" y="190" width="2" height="2" fill="#808080"/>
<rect x="958" y="188" width="2" height="2" fill="#808080"/>
<rect x="959" y="193" width="2" height="2" fill="#808080"/>
<rect x="953" y="196" width="2" height="2" fill="#808080"/>
<rect x="961" y="161" width="2" height="2" fill="#808080"/>
<rect x="960" y="173" width="2" height="2" fill="#808080"/>
<rect x="962" y="198" width="2" height="2" fill="#808080"/>
<rect x="1006" y="129" width="2" height="2" fill="#808080"/>
<rect x="1003" y="134" width="2" height="2" fill="#808080"/>
<rect x="1001" y="140" width="2" height="2" fill="#808080"/>
<rect x="1007" y="140" width="2" height="2" fill="#808080"/>
<rect x="1000" y="150" width="2" height="2" fill="#808080"/>
<rect x="1002" y="149" width="2" height="2" fill="#808080"/>
<rect x="997" y="153" width="2" height="2" fill="#808080"/>
<rect x="997" y="156" width="2" height="2" fill="#808080"/>
<rect x="1005" y="155" width="2" height="2" fill="#808080"/>
<rect x="1006" y="157" width="2" height="2" fill="#808080"/>
<rect x="1011" y="157" width="2" height="2" fill="#808080"/>
<rect x="1008" y="161" width="2" height="2" fill="#808080"/>
<rect x="995" y="160" width="2" height="2" fill="#808080"/>
<rect x="996" y="162" width="2" height="2" fill="#808080"/>
<rect x="994" y="168" width="2" height="2" fill="#808080"/>
<rect x="1009" y="179" width="2" height="2" fill="#808080"/>
<rect x="992" y="192" width="2" height="2" fill="#808080"/>
<rect x="1010" y="192" width="2" height="2" fill="#808080"/>
<rect x="1012" y="198" width="2" height="2" fill="#808080"/>
<rect x="991" y="198" width="2" height="2" fill="#808080"/>
<rect x="1025" y="158" width="2" height="2" fill="#808080"/>
<rect x="1026" y="162" width="2" height="2" fill="#808080"/>
<rect x="1027" y="172" width="2" height="2" fill="#808080"/>
<rect x="1023" y="182" width="2" height="2" fill="#808080"/>
<rect x="1024" y="188" width="2" height="2" fill="#808080"/>
<rect x="1028" y="191" width="2" height="2" fill="#808080"/>
<rect x="1028" y="196" width="2" height="2" fill="#808080"/>
<rect x="1023" y="198" width="2" height="2" fill="#808080"/>
<rect x="1048" y="115" width="2" height="2" fill="#808080"/>
<rect x="1049" y="117" width="2" height="2" fill="#808080"/>
<rect x="1047" y="122" width="2" height="2" fill="#808080"/>
<rect x="1046" y="127" width="2" height="2" fill="#808080"/>
<rect x="1049" y="126" width="2" height="2" fill="#808080"/>
<rect x="1051" y="127" width="2" height="2" fill="#808080"/>
<rect x="1059" y="115" width="2" height="2" fill="#808080"/>
<rect x="1061" y="125" width="2" height="2" fill="#808080"/>
<rect x="1062" y="130" width="2" height="2" fill="#808080"/>
<rect x="1069" y="128" width="2" height="2" fill="#808080"/>
<rect x="1068" y="132" width="2" height="2" fill="#808080"/>
<rect x="1070" y="134" width="2" height="2" fill="#808080"/>
<rect x="1043" y="138" width="2" height="2" fill="#808080"/>
<rect x="1050" y="138" width="2" height="2" fill="#808080"/>
<rect x="1055" y="136" width="2" height="2" fill="#808080"/>
<rect x="1058" y="137" width="2" height="2" fill="#808080"/>
<rect x="1062" y="142" width="2" height="2" fill="#808080"/>
<rect x="1064" y="146" width="2" height="2" fill="#808080"/>
<rect x="1066" y="148" width="2" height="2" fill="#808080"/>
<rect x="1067" y="139" width="2" height="2" fill="#808080"/>
<rect x="1076" y="136" width="2" height="2" fill="#808080"/>
<rect x="1076" y="142" width="2" height="2" fill="#808080"/>
<rect x="1074" y="148" width="2" height="2" fill="#808080"/>
<rect x="1057" y="146" width="2" height="2" fill="#808080"/>
<rect x="1054" y="150" width="2" height="2" fill="#808080"/>
<rect x="1057" y="151" width="2" height="2" fill="#808080"/>
<rect x="1044" y="151" width="2" height="2" fill="#808080"/>
<rect x="1045" y="155" width="2" height="2" fill="#808080"/>
<rect x="1045" y="160" width="2" height="2" fill="#808080"/>
<rect x="1042" y="161" width="2" height="2" fill="#808080"/>
<rect x="1040" y="165" width="2" height="2" fill="#808080"/>
<rect x="1040" y="171" width="2" height="2" fill="#808080"/>
<rect x="1054" y="157" width="2" height="2" fill="#808080"/>
<rect x="1052" y="164" width="2" height="2" fill="#808080"/>
<rect x="1053" y="169" width="2" height="2" fill="#808080"/>
<rect x="1065" y="158" width="2" height="2" fill="#808080"/>
<rect x="1066" y="164" width="2" height="2" fill="#808080"/>
<rect x="1071" y="164" width="2" height="2" fill="#808080"/>
<rect x="1073" y="164" width="2" height="2" fill="#808080"/>
<rect x="1071" y="176" width="2" height="2" fill="#808080"/>
<rect x="1039" y="185" width="2" height="2" fill="#808080"/>
<rect x="1077" y="191" width="2" height="2" fill="#808080"/>
<rect x="1117" y="95" width="2" height="2" fill="#808080"/>
<rect x="1115" y="97" width="2" height="2" fill="#808080"/>
<rect x="1115" y="98" width="2" height="2" fill="#808080"/>
<rect x="1114" y="101" width="2" height="2" fill="#808080"/>
<rect x="1114" y="105" width="2" height="2" fill="#808080"/>
<rect x="1113" y="110" width="2" height="2" fill="#808080"/>
<rect x="1112" y="118" width="2" height="2" fill="#808080"/>
<rect x="1111" y="126" width="2" height="2" fill="#808080"/>
<rect x="1110" y="141" width="2" height="2" fill="#808080"/>
<rect x="1110" y="161" width="2" height="2" fill="#808080"/>
<rect x="1109" y="186" width="2" height="2" fill="#808080"/>
<rect x="1097" y="134" width="2" height="2" fill="#808080"/>
<rect x="1102" y="134" width="2" height="2" fill="#808080"/>
<rect x="1097" y="142" width="2" height="2" fill="#808080"/>
<rect x="1096" y="153" width="2" height="2" fill="#808080"/>
<rect x="1100" y="163" width="2" height="2" fill="#808080"/>
<rect x="1095" y="167" width="2" height="2" fill="#808080"/>
<rect x="1103" y="172" width="2" height="2" fill="#808080"/>
<rect x="1098" y="177" width="2" height="2" fill="#808080"/>
<rect x="1100" y="182" width="2" height="2" fill="#808080"/>
<rect x="1094" y="184" width="2" height="2" fill="#808080"/>
<rect x="1099" y="188" width="2" height="2" fill="#808080"/>
<rect x="1121" y="140" width="2" height="2" fill="#808080"/>
<rect x="1118" y="145" width="2" height="2" fill="#808080"/>
<rect x="1118" y="160" width="2" height="2" fill="#808080"/>
<rect x="934" y="195" width="2" height="2" fill="#808080"/>
<rect x="941" y="195" width="2" height="2" fill="#808080"/>
<rect x="953" y="196" width="2" height="2" fill="#808080"/>
<rect x="956" y="191" width="2" height="2" fill="#808080"/>
<rect x="961" y="198" width="2" height="2" fill="#808080"/>
<rect x="961" y="204" width="2" height="2" fill="#808080"/>
<rect x="950" y="214" width="2" height="2" fill="#808080"/>
<rect x="968" y="214" width="2" height="2" fill="#808080"/>
<rect x="963" y="219" width="2" height="2" fill="#808080"/>
<rect x="967" y="218" width="2" height="2" fill="#808080"/>
<rect x="964" y="226" width="2" height="2" fill="#808080"/>
<rect x="965" y="232" width="2" height="2" fill="#808080"/>
<rect x="967" y="233" width="2" height="2" fill="#808080"/>
<rect x="949" y="237" width="2" height="2" fill="#808080"/>
<rect x="947" y="284" width="2" height="2" fill="#808080"/>
<rect x="948" y="270" width="2" height="2" fill="#808080"/>
<rect x="974" y="321" width="2" height="2" fill="#808080"/>
<rect x="979" y="318" width="2" height="2" fill="#808080"/>
<rect x="992" y="192" width="2" height="2" fill="#808080"/>
<rect x="987" y="200" width="2" height="2" fill="#808080"/>
<rect x="991" y="200" width="2" height="2" fill="#808080"/>
<rect x="989" y="208" width="2" height="2" fill="#808080"/>
<rect x="988" y="219" width="2" height="2" fill="#808080"/>
<rect x="980" y="217" width="2" height="2" fill="#808080"/>
<rect x="983" y="224" width="2" height="2" fill="#808080"/>
<rect x="988" y="226" width="2" height="2" fill="#808080"/>
<rect x="982" y="230" width="2" height="2" fill="#808080"/>
<rect x="981" y="231" width="2" height="2" fill="#808080"/>
<rect x="985" y="234" width="2" height="2" fill="#808080"/>
<rect x="980" y="257" width="2" height="2" fill="#808080"/>
<rect x="1010" y="192" width="2" height="2" fill="#808080"/>
<rect x="1012" y="198" width="2" height="2" fill="#808080"/>
<rect x="1015" y="203" width="2" height="2" fill="#808080"/>
<rect x="1017" y="204" width="2" height="2" fill="#808080"/>
<rect x="1023" y="199" width="2" height="2" fill="#808080"/>
<rect x="1015" y="210" width="2" height="2" fill="#808080"/>
<rect x="1021" y="209" width="2" height="2" fill="#808080"/>
<rect x="1014" y="214" width="2" height="2" fill="#808080"/>
<rect x="1019" y="217" width="2" height="2" fill="#808080"/>
<rect x="1015" y="224" width="2" height="2" fill="#808080"/>
<rect x="1018" y="239" width="2" height="2" fill="#808080"/>
<rect x="1028" y="194" width="2" height="2" fill="#808080"/>
<rect x="1030" y="200" width="2" height="2" fill="#808080"/>
<rect x="1032" y="203" width="2" height="2" fill="#808080"/>
<rect x="1032" y="211" width="2" height="2" fill="#808080"/>
<rect x="1037" y="211" width="2" height="2" fill="#808080"/>
<rect x="1031" y="221" width="2" height="2" fill="#808080"/>
<rect x="1036" y="240" width="2" height="2" fill="#808080"/>
<rect x="1034" y="254" width="2" height="2" fill="#808080"/>
<rect x="1035" y="274" width="2" height="2" fill="#808080"/>
<rect x="1078" y="200" width="2" height="2" fill="#808080"/>
<rect x="1079" y="208" width="2" height="2" fill="#808080"/>
<rect x="1093" y="211" width="2" height="2" fill="#808080"/>
<rect x="1091" y="233" width="2" height="2" fill="#808080"/>
<rect x="1104" y="234" width="2" height="2" fill="#808080"/>
<rect x="1108" y="240" width="2" height="2" fill="#808080"/>
<rect x="1106" y="263" width="2" height="2" fill="#808080"/>
<rect x="1106" y="272" width="2" height="2" fill="#808080"/>
<rect x="1106" y="285" width="2" height="2" fill="#808080"/>
<rect x="1091" y="292" width="2" height="2" fill="#808080"/>
<rect x="1091" y="299" width="2" height="2" fill="#808080"/>
<rect x="1088" y="325" width="2" height="2" fill="#808080"/>
<rect x="736" y="197" width="2" height="2" fill="#808080"/>
<rect x="758" y="198" width="2" height="2" fill="#808080"/>
<rect x="757" y="203" width="2" height="2" fill="#808080"/>
<rect x="760" y="205" width="2" height="2" fill="#808080"/>
<rect x="746" y="212" width="2" height="2" fill="#808080"/>
<rect x="751" y="209" width="2" height="2" fill="#808080"/>
<rect x="748" y="212" width="2" height="2" fill="#808080"/>
<rect x="756" y="213" width="2" height="2" fill="#808080"/>
<rect x="761" y="211" width="2" height="2" fill="#808080"/>
<rect x="747" y="216" width="2" height="2" fill="#808080"/>
<rect x="752" y="217" width="2" height="2" fill="#808080"/>
<rect x="753" y="225" width="2" height="2" fill="#808080"/>
<rect x="746" y="229" width="2" height="2" fill="#808080"/>
<rect x="754" y="231" width="2" height="2" fill="#808080"/>
<rect x="754" y="236" width="2" height="2" fill="#808080"/>
<rect x="755" y="239" width="2" height="2" fill="#808080"/>
<rect x="745" y="253" width="2" height="2" fill="#808080"/>
<rect x="744" y="300" width="2" height="2" fill="#808080"/>
<rect x="806" y="200" width="2" height="2" fill="#808080"/>
<rect x="823" y="192" width="2" height="2" fill="#808080"/>
<rect x="823" y="223" width="2" height="2" fill="#808080"/>
<rect x="825" y="233" width="2" height="2" fill="#808080"/>
<rect x="805" y="236" width="2" height="2" fill="#808080"/>
<rect x="804" y="247" width="2" height="2" fill="#808080"/>
<rect x="845" y="246" width="2" height="2" fill="#808080"/>
<rect x="846" y="216" width="2" height="2" fill="#808080"/>
<rect x="858" y="197" width="2" height="2" fill="#808080"/>
<rect x="858" y="203" width="2" height="2" fill="#808080"/>
<rect x="870" y="199" width="2" height="2" fill="#808080"/>
<rect x="872" y="192" width="2" height="2" fill="#808080"/>
<rect x="877" y="197" width="2" height="2" fill="#808080"/>
<rect x="876" y="215" width="2" height="2" fill="#808080"/>
<rect x="876" y="232" width="2" height="2" fill="#808080"/>
<rect x="893" y="195" width="2" height="2" fill="#808080"/>
<rect x="901" y="198" width="2" height="2" fill="#808080"/>
<rect x="904" y="196" width="2" height="2" fill="#808080"/>
<rect x="899" y="213" width="2" height="2" fill="#808080"/>
<rect x="898" y="243" width="2" height="2" fill="#808080"/>
<rect x="898" y="252" width="2" height="2" fill="#808080"/>
<rect x="896" y="278" width="2" height="2" fill="#808080"/>
<rect x="892" y="315" width="2" height="2" fill="#808080"/>
<rect x="844" y="324" width="2" height="2" fill="#808080"/>
<rect x="822" y="306" width="2" height="2" fill="#808080"/>
<rect x="802" y="306" width="2" height="2" fill="#808080"/>
<rect x="794" y="327" width="2" height="2" fill="#808080"/>
<rect x="699" y="311" width="2" height="2" fill="#808080"/>
<rect x="699" y="317" width="2" height="2" fill="#808080"/>
<rect x="701" y="281" width="2" height="2" fill="#808080"/>
<rect x="702" y="247" width="2" height="2" fill="#808080"/>
<rect x="703" y="236" width="2" height="2" fill="#808080"/>
<rect x="704" y="227" width="2" height="2" fill="#808080"/>
<rect x="705" y="221" width="2" height="2" fill="#808080"/>
<rect x="706" y="216" width="2" height="2" fill="#808080"/>
<rect x="707" y="210" width="2" height="2" fill="#808080"/>
<rect x="708" y="205" width="2" height="2" fill="#808080"/>
<rect x="710" y="201" width="2" height="2" fill="#808080"/>
<rect x="712" y="199" width="2" height="2" fill="#808080"/>
<rect x="714" y="201" width="2" height="2" fill="#808080"/>
<rect x="716" y="203" width="2" height="2" fill="#808080"/>
<rect x="702" y="263" width="2" height="2" fill="#808080"/>
<rect x="698" y="359" width="2" height="2" fill="#808080"/>
<rect x="698" y="431" width="2" height="2" fill="#808080"/>
<rect x="734" y="350" width="2" height="2" fill="#808080"/>
<rect x="737" y="340" width="2" height="2" fill="#808080"/>
<rect x="737" y="369" width="2" height="2" fill="#808080"/>
<rect x="738" y="453" width="2" height="2" fill="#808080"/>
<rect x="743" y="330" width="2" height="2" fill="#808080"/>
<rect x="736" y="340" width="2" height="2" fill="#808080"/>
<rect x="742" y="365" width="2" height="2" fill="#808080"/>
<rect x="738" y="369" width="2" height="2" fill="#808080"/>
<rect x="742" y="375" width="2" height="2" fill="#808080"/>
<rect x="794" y="327" width="2" height="2" fill="#808080"/>
<rect x="802" y="340" width="2" height="2" fill="#808080"/>
<rect x="844" y="324" width="2" height="2" fill="#808080"/>
<rect x="843" y="332" width="2" height="2" fill="#808080"/>
<rect x="838" y="342" width="2" height="2" fill="#808080"/>
<rect x="841" y="364" width="2" height="2" fill="#808080"/>
<rect x="875" y="336" width="2" height="2" fill="#808080"/>
<rect x="895" y="339" width="2" height="2" fill="#808080"/>
<rect x="896" y="386" width="2" height="2" fill="#808080"/>
<rect x="824" y="419" width="2" height="2" fill="#808080"/>
<rect x="802" y="436" width="2" height="2" fill="#808080"/>
<rect x="740" y="446" width="2" height="2" fill="#808080"/>
<rect x="739" y="453" width="2" height="2" fill="#808080"/>
<rect x="796" y="451" width="2" height="2" fill="#808080"/>
<rect x="801" y="456" width="2" height="2" fill="#808080"/>
<rect x="974" y="321" width="2" height="2" fill="#808080"/>
<rect x="977" y="350" width="2" height="2" fill="#808080"/>
<rect x="942" y="374" width="2" height="2" fill="#808080"/>
<rect x="946" y="372" width="2" height="2" fill="#808080"/>
<rect x="973" y="387" width="2" height="2" fill="#808080"/>
<rect x="969" y="396" width="2" height="2" fill="#808080"/>
<rect x="1033" y="386" width="2" height="2" fill="#808080"/>
<rect x="1089" y="325" width="2" height="2" fill="#808080"/>
<rect x="1088" y="345" width="2" height="2" fill="#808080"/>
<rect x="1088" y="348" width="2" height="2" fill="#808080"/>
<rect x="1121" y="336" width="2" height="2" fill="#808080"/>
<rect x="1123" y="402" width="2" height="2" fill="#808080"/>
<rect x="1087" y="417" width="2" height="2" fill="#808080"/>
<rect x="1080" y="434" width="2" height="2" fill="#808080"/>
<rect x="972" y="424" width="2" height="2" fill="#808080"/>
<rect x="943" y="435" width="2" height="2" fill="#808080"/>
<rect x="976" y="438" width="2" height="2" fill="#808080"/>
<rect x="970" y="456" width="2" height="2" fill="#808080"/>
<rect x="944" y="407" width="2" height="2" fill="#808080"/>
<rect x="970" y="456" width="2" height="2" fill="#808080"/>
<rect x="976" y="477" width="2" height="2" fill="#808080"/>
<rect x="944" y="515" width="2" height="2" fill="#808080"/>
<rect x="971" y="537" width="2" height="2" fill="#808080"/>
<rect x="945" y="563" width="2" height="2" fill="#808080"/>
<rect x="971" y="583" width="2" height="2" fill="#808080"/>
<rect x="1086" y="476" width="2" height="2" fill="#808080"/>
<rect x="1090" y="472" width="2" height="2" fill="#808080"/>
<rect x="1081" y="517" width="2" height="2" fill="#808080"/>
<rect x="1082" y="565" width="2" height="2" fill="#808080"/>
<rect x="1083" y="608" width="2" height="2" fill="#808080"/>
<rect x="1084" y="624" width="2" height="2" fill="#808080"/>
<rect x="1143" y="462" width="2" height="2" fill="#808080"/>
<rect x="1132" y="478" width="2" height="2" fill="#808080"/>
<rect x="1129" y="483" width="2" height="2" fill="#808080"/>
<rect x="1123" y="490" width="2" height="2" fill="#808080"/>
<rect x="1132" y="503" width="2" height="2" fill="#808080"/>
<rect x="1142" y="511" width="2" height="2" fill="#808080"/>
<rect x="1128" y="529" width="2" height="2" fill="#808080"/>
<rect x="1124" y="545" width="2" height="2" fill="#808080"/>
<rect x="1133" y="550" width="2" height="2" fill="#808080"/>
<rect x="1134" y="574" width="2" height="2" fill="#808080"/>
<rect x="1125" y="592" width="2" height="2" fill="#808080"/>
<rect x="1135" y="598" width="2" height="2" fill="#808080"/>
<rect x="1136" y="613" width="2" height="2" fill="#808080"/>
<rect x="1136" y="627" width="2" height="2" fill="#808080"/>
<rect x="1137" y="636" width="2" height="2" fill="#808080"/>
<rect x="1126" y="628" width="2" height="2" fill="#808080"/>
<rect x="740" y="446" width="2" height="2" fill="#808080"/>
<rect x="739" y="453" width="2" height="2" fill="#808080"/>
<rect x="741" y="471" width="2" height="2" fill="#808080"/>
<rect x="796" y="451" width="2" height="2" fill="#808080"/>
<rect x="801" y="456" width="2" height="2" fill="#808080"/>
<rect x="797" y="492" width="2" height="2" fill="#808080"/>
<rect x="798" y="529" width="2" height="2" fill="#808080"/>
<rect x="798" y="586" width="2" height="2" fill="#808080"/>
<rect x="799" y="617" width="2" height="2" fill="#808080"/>
<rect x="840" y="479" width="2" height="2" fill="#808080"/>
<rect x="841" y="535" width="2" height="2" fill="#808080"/>
<rect x="842" y="555" width="2" height="2" fill="#808080"/>
<rect x="1082" y="565" width="2" height="2" fill="#808080"/>
<rect x="1083" y="608" width="2" height="2" fill="#808080"/>
<rect x="1084" y="645" width="2" height="2" fill="#808080"/>
<rect x="1085" y="659" width="2" height="2" fill="#808080"/>
<rect x="1134" y="574" width="2" height="2" fill="#808080"/>
<rect x="1125" y="592" width="2" height="2" fill="#808080"/>
<rect x="1135" y="598" width="2" height="2" fill="#808080"/>
<rect x="1136" y="613" width="2" height="2" fill="#808080"/>
<rect x="1136" y="627" width="2" height="2" fill="#808080"/>
<rect x="1137" y="636" width="2" height="2" fill="#808080"/>
<rect x="1138" y="644" width="2" height="2" fill="#808080"/>
<rect x="1139" y="650" width="2" height="2" fill="#808080"/>
<rect x="1140" y="654" width="2" height="2" fill="#808080"/>
<rect x="1140" y="658" width="2" height="2" fill="#808080"/>
<rect x="1126" y="628" width="2" height="2" fill="#808080"/>
<rect x="1127" y="656" width="2" height="2" fill="#808080"/>
<rect x="1133" y="550" width="2" height="2" fill="#808080"/>
<rect x="1085" y="659" width="2" height="2" fill="#808080"/>
<rect x="1127" y="656" width="2" height="2" fill="#808080"/>
<rect x="1127" y="680" width="2" height="2" fill="#808080"/>
<rect x="1139" y="649" width="2" height="2" fill="#808080"/>
<rect x="1140" y="654" width="2" height="2" fill="#808080"/>
<rect x="1141" y="660" width="2" height="2" fill="#808080"/>
<rect x="799" y="617" width="2" height="2" fill="#808080"/>
<rect x="800" y="640" width="2" height="2" fill="#808080"/>
<rect x="1147" y="212" width="2" height="2" fill="#808080"/>
<rect x="1149" y="227" width="2" height="2" fill="#808080"/>
<rect x="1146" y="238" width="2" height="2" fill="#808080"/>
<rect x="1144" y="316" width="2" height="2" fill="#808080"/>
<rect x="1144" y="365" width="2" height="2" fill="#808080"/>
<rect x="1131" y="374" width="2" height="2" fill="#808080"/>
<rect x="1129" y="407" width="2" height="2" fill="#808080"/>
<rect x="680" y="150" width="2" height="2" fill="#808080"/>
<rect x="681" y="153" width="2" height="2" fill="#808080"/>
<rect x="683" y="155" width="2" height="2" fill="#808080"/>
<rect x="685" y="156" width="2" height="2" fill="#808080"/>
<rect x="684" y="161" width="2" height="2" fill="#808080"/>
<rect x="686" y="161" width="2" height="2" fill="#808080"/>
<rect x="688" y="162" width="2" height="2" fill="#808080"/>
<rect x="690" y="163" width="2" height="2" fill="#808080"/>
<rect x="692" y="164" width="2" height="2" fill="#808080"/>
<rect x="694" y="165" width="2" height="2" fill="#808080"/>
<rect x="696" y="166" width="2" height="2" fill="#808080"/>
<rect x="719" y="176" width="2" height="2" fill="#808080"/>
<rect x="720" y="177" width="2" height="2" fill="#808080"/>
<rect x="728" y="149" width="2" height="2" fill="#808080"/>
<rect x="730" y="150" width="2" height="2" fill="#808080"/>
<rect x="175" y="115" width="2" height="2" fill="#808080"/>
<rect x="647" y="191" width="2" height="2" fill="#808080"/>
<rect x="649" y="193" width="2" height="2" fill="#808080"/>
<rect x="651" y="193" width="2" height="2" fill="#808080"/>
<rect x="653" y="193" width="2" height="2" fill="#808080"/>
<rect x="655" y="191" width="2" height="2" fill="#808080"/>
<g shape-rendering="crispEdges">
<polyline points="151.0,105.5 176.0,105.5" fill="none" stroke="#808080" stroke-width="2" stroke-linejoin="round"/>
<polyline points="177.0,123.0 178.5,127.0 180.5,131.0 183.0,134.5 187.0,136.0 600.0,136.0 604.0,139.5 608.0,140.5 627.0,140.5 631.0,142.5 638.0,140.5 643.0,141.5" fill="none" stroke="#808080" stroke-width="2" stroke-linejoin="round"/>
<polyline points="1148.0,230.0 1153.0,237.0 1158.0,240.0 1321.0,240.0" fill="none" stroke="#808080" stroke-width="2" stroke-linejoin="round"/>
<polyline points="151.0,403.0 200.0,402.5 212.0,403.5 230.0,402.5 270.0,403.0 290.0,403.0 297.0,405.0 303.0,405.0 310.0,402.5 360.0,402.5 390.0,404.5 396.0,403.0 400.0,405.5 413.0,407.0 425.0,405.5 442.0,404.5 465.0,404.0 476.0,402.0 492.0,402.0 500.0,403.0 505.0,401.0 540.0,401.0 551.0,400.0 555.0,402.0 588.0,402.0 604.0,401.0 620.0,400.0 640.0,400.0 660.0,398.0 665.0,396.0 688.0,395.0 705.0,394.0 740.0,395.0 760.0,396.0 790.0,396.0 800.0,397.0 815.0,398.0 830.0,399.0 845.0,401.0 860.0,403.0 870.0,402.0 890.0,402.0 905.0,404.0 915.0,406.0 937.0,405.0 945.0,406.5 960.0,407.0 995.0,407.0 1006.0,408.0 1020.0,407.0 1025.0,408.0 1045.0,407.0 1050.0,406.0 1060.0,405.0 1075.0,406.0 1090.0,407.0 1125.0,407.5 1131.0,405.0 1145.0,403.0 1157.0,402.0 1165.0,399.0 1172.0,398.0 1185.0,396.0 1197.0,393.0 1210.0,390.0 1220.0,387.0 1238.0,386.0 1243.0,384.0 1250.0,384.0 1262.0,386.0 1275.0,384.5 1290.0,383.0 1305.0,383.0 1321.0,381.0" fill="none" stroke="#00ff40" stroke-width="2" stroke-linejoin="round"/>
<polyline points="151.0,419.3 160.0,420.0 168.0,423.6 172.0,422.0 200.0,428.0 249.0,438.5 297.0,442.8 346.0,450.7 390.0,457.5 407.0,457.5 420.0,460.0 436.0,463.0 447.0,465.0 460.0,465.0 471.0,464.0 491.0,463.5 505.0,462.0 515.0,460.5 520.0,456.5 527.0,452.5 535.0,446.0 540.0,443.0 545.0,438.0 551.0,433.0 558.0,429.0 566.0,424.0 573.0,419.0 580.0,413.0 589.0,405.0 596.0,398.0 604.0,393.0 613.0,387.0 621.0,384.0 628.0,381.0 632.0,378.0 639.0,378.0 643.0,377.0 651.0,376.0 655.0,375.0 659.0,377.0 665.0,377.0 668.0,381.0 673.0,383.0 677.0,382.0 684.0,383.0 688.0,381.0 691.0,384.0 694.0,389.0 696.0,394.0 700.0,390.0 705.0,388.0 709.0,389.0 711.0,393.0 714.0,390.0 717.0,393.0 721.0,384.0 727.0,384.0 732.0,380.0 737.0,378.0 741.0,386.0 745.0,386.0 748.0,390.0 753.0,389.0 758.0,389.0 762.0,392.0 764.0,395.0 770.0,394.0 775.0,387.0 778.0,383.0 781.0,382.0 785.0,388.0 787.0,390.0 792.0,387.0 797.0,381.0 800.0,386.0 804.0,383.0 808.0,383.0 812.0,385.0 816.0,386.0 820.0,383.0 823.0,381.0 826.0,385.0 829.0,396.0 832.0,393.0 835.0,397.0 839.0,393.0 842.0,394.0 846.0,389.0 849.0,387.0 853.0,385.0 858.0,385.0 863.0,387.0 870.0,386.0 875.0,382.0 879.0,381.0 884.0,380.0 889.0,377.0 894.0,373.0 898.0,376.0 902.0,379.0 908.0,379.5 915.0,380.0 920.0,376.0 925.0,374.5 930.0,375.0 937.0,374.0 943.0,371.0 950.0,370.5 956.0,369.0 962.0,367.0 968.0,367.0 972.0,365.0 975.0,368.0 980.0,366.0 985.0,371.0 990.0,370.0 994.0,369.0 1000.0,370.5 1005.0,370.0 1011.0,372.0 1017.0,375.0 1023.0,372.0 1045.0,372.0 1060.0,372.0 1075.0,371.0 1081.0,370.0 1088.0,372.0 1095.0,374.0 1101.0,376.5 1106.0,377.0 1111.0,381.0 1117.0,381.0 1122.0,380.0 1125.0,381.0 1132.0,382.0 1136.0,386.0 1140.0,385.0 1143.0,388.0 1148.0,389.0 1153.0,393.0 1158.0,394.0 1165.0,395.0 1178.0,396.0 1185.0,398.0 1192.0,400.0 1199.0,402.0 1205.0,405.0 1215.0,406.0 1220.0,408.0 1226.0,411.0 1232.0,413.5 1240.0,413.0 1247.0,415.5 1257.0,415.0 1265.0,415.0 1275.0,413.0 1283.0,412.0 1295.0,411.0 1303.0,411.0 1310.0,409.0 1321.0,410.0" fill="none" stroke="#008040" stroke-width="2" stroke-linejoin="round"/>
<polyline points="149.5,395.4 158.5,396.5 174.5,399.0 198.5,403.6 247.5,416.6 295.5,423.6 344.5,431.5 388.5,440.0 403.5,441.0 418.5,443.0 431.5,445.0 445.5,447.0 461.5,447.5 492.5,447.5 503.5,446.0 513.5,446.0 518.5,443.0 528.5,439.0 538.5,431.0 544.5,426.0 550.5,422.0 556.5,418.0 562.5,414.0 568.5,410.0 576.5,403.0 583.5,397.0 590.5,391.0 596.5,385.0 604.5,380.0 612.5,375.0 619.5,372.0 627.5,367.0 636.5,362.0 645.5,358.0 653.5,352.0 661.5,346.0 669.5,340.0 675.5,334.0 682.5,322.0 689.5,313.0 696.5,306.0 704.5,292.0 712.5,287.0 721.5,279.0 729.5,272.0 736.5,267.0 744.5,263.0 752.5,259.0 758.5,258.0 774.5,258.0 780.5,254.0 785.5,252.0 789.5,250.0 795.5,246.0 800.5,245.0 805.5,241.0 808.5,241.0 817.5,241.0 822.5,239.0 826.5,238.0 838.5,237.0 843.5,238.0 846.5,239.0 856.5,239.0 859.5,243.0 864.5,246.0 870.5,247.5 876.5,246.0 885.5,245.0 890.5,241.0 894.5,239.0 898.5,239.0 903.5,241.0 908.5,243.0 913.5,248.0 918.5,253.0 923.5,257.0 928.5,262.0 933.5,264.0 940.5,265.0 948.5,268.0 955.5,271.0 962.5,273.0 970.5,272.0 979.5,273.0 988.5,276.0 995.5,280.0 1004.5,284.0 1013.5,289.0 1022.5,290.0 1032.5,290.0 1060.5,290.0 1070.5,293.0 1082.5,296.0 1093.5,299.0 1105.5,303.0 1114.5,306.0 1123.5,308.0 1131.5,310.0 1139.5,312.0 1148.5,316.0 1158.5,321.0 1168.5,326.0 1176.5,330.0 1183.5,334.0 1191.5,339.0 1199.5,344.0 1207.5,349.0 1215.5,353.0 1225.5,358.0 1234.5,362.0 1243.5,366.0 1253.5,368.0 1263.5,370.0 1271.5,371.0 1278.5,373.0 1288.5,374.0 1298.5,375.0 1308.5,375.5 1319.5,376.0" fill="none" stroke="#ff8000" stroke-width="2" stroke-linejoin="round"/>
<polyline points="151.0,395.4 160.0,396.5 176.0,399.0 200.0,403.6 249.0,416.6 297.0,423.6 346.0,431.5 390.0,440.0 405.0,441.0 420.0,443.0 433.0,445.0 447.0,447.0 463.0,447.5 494.0,447.5 505.0,446.0 515.0,446.0 520.0,443.0 530.0,439.0 540.0,431.0 546.0,426.0 552.0,422.0 558.0,418.0 564.0,414.0 570.0,410.0 578.0,403.0 585.0,397.0 592.0,391.0 598.0,385.0 606.0,380.0 614.0,375.0 621.0,372.0 629.0,367.0 638.0,362.0 647.0,358.0 655.0,352.0 663.0,346.0 671.0,340.0 677.0,334.0 684.0,322.0 691.0,313.0 698.0,306.0 706.0,292.0 714.0,287.0 723.0,279.0 731.0,272.0 738.0,267.0 746.0,263.0 754.0,259.0 760.0,258.0 776.0,258.0 782.0,254.0 787.0,252.0 791.0,250.0 797.0,246.0 802.0,245.0 807.0,241.0 810.0,241.0 819.0,241.0 824.0,239.0 828.0,238.0 840.0,237.0 845.0,238.0 848.0,239.0 858.0,239.0 861.0,243.0 866.0,246.0 872.0,247.5 878.0,246.0 887.0,245.0 892.0,241.0 896.0,239.0 900.0,239.0 905.0,241.0 910.0,243.0 915.0,248.0 920.0,253.0 925.0,257.0 930.0,262.0 935.0,264.0 942.0,265.0 950.0,268.0 957.0,271.0 964.0,273.0 972.0,272.0 981.0,273.0 990.0,276.0 997.0,280.0 1006.0,284.0 1015.0,289.0 1024.0,290.0 1034.0,290.0 1062.0,290.0 1072.0,293.0 1084.0,296.0 1095.0,299.0 1107.0,303.0 1116.0,306.0 1125.0,308.0 1133.0,310.0 1141.0,312.0 1150.0,316.0 1160.0,321.0 1170.0,326.0 1178.0,330.0 1185.0,334.0 1193.0,339.0 1201.0,344.0 1209.0,349.0 1217.0,353.0 1227.0,358.0 1236.0,362.0 1245.0,366.0 1255.0,368.0 1265.0,370.0 1273.0,371.0 1280.0,373.0 1290.0,374.0 1300.0,375.0 1310.0,375.5 1321.0,376.0" fill="none" stroke="#0000ff" stroke-width="2" stroke-linejoin="round"/>
<polyline points="151.0,432.0 181.0,432.0 184.0,436.0 190.0,439.0 214.0,440.0 218.0,443.0 223.0,446.0 228.0,448.0 230.5,445.5 234.0,448.0 291.0,448.0 296.0,453.0 300.0,455.0 330.0,455.0 334.0,461.0 337.0,463.0 341.0,458.0 345.0,456.0 354.0,456.0 359.0,462.0 362.0,464.0 383.0,464.0 387.0,470.0 392.0,466.0 396.0,464.5 404.0,464.0 408.0,468.0 412.0,470.5 460.0,470.5 466.0,465.0 472.0,464.0 491.0,463.5 494.0,459.0 498.0,456.0 505.0,455.0 509.0,450.5 515.0,448.0 518.0,444.0 522.0,441.0 527.0,437.0 530.0,433.0 534.0,433.0 537.0,428.0 541.0,425.0 544.0,425.0 547.0,419.0 551.0,417.0 554.0,414.0 556.0,407.0 559.0,403.0 561.0,396.0 565.0,393.0 568.0,392.0 572.0,391.0 577.0,385.0 580.0,381.0 584.0,378.0 588.0,376.0 591.0,370.0 594.0,367.0 596.0,363.0 600.0,358.0 602.0,356.0 606.0,353.0 609.0,352.0 612.0,349.0 615.0,346.0 618.0,348.0 621.0,350.0 625.0,346.0 627.0,337.0 629.0,330.0 631.0,318.0 634.0,317.0 639.0,319.0 641.0,320.0 645.0,325.5 648.0,318.0 651.0,310.0 656.0,305.0 658.0,303.0 663.0,300.0 667.0,303.0 670.0,302.0 673.0,297.0 673.0,290.0 676.0,276.0 678.0,262.0 681.0,249.0 682.0,231.0 683.0,215.0 685.0,203.0 687.0,187.0 689.0,173.0 692.0,168.0 695.0,172.0 697.0,186.0 698.0,189.0 701.0,173.0 705.0,171.0 710.0,169.0 714.0,172.0 716.0,178.0 718.0,178.0 721.0,163.0 724.0,153.0 727.0,147.0 730.0,138.0 733.0,127.0 735.0,128.4 738.0,130.0 741.8,127.0 744.0,138.0 745.5,144.0 748.5,141.0 751.5,141.0 755.3,133.7 758.3,136.7 759.8,150.0 762.0,170.0 764.3,189.3 768.0,178.8 771.0,184.8 774.0,165.0 777.0,156.0 778.6,136.7 782.4,121.7 786.0,118.6 789.0,125.4 794.4,120.0 796.7,103.6 799.7,93.0 801.2,87.8 804.2,87.0 808.7,94.6 811.7,115.6 815.5,113.4 817.7,94.6 820.0,81.0 821.5,82.6 824.5,112.6 828.2,115.6 830.5,127.7 837.3,118.6 839.5,105.0 841.0,106.6 843.3,138.0 846.3,171.3 850.8,153.2 854.5,151.7 857.1,145.7 859.8,163.8 863.6,200.0 865.0,219.0 866.0,219.0 868.8,198.0 872.6,159.0 877.1,142.0 881.6,162.0 885.4,200.0 887.0,209.0 891.0,214.0 894.0,220.0 895.0,225.0 898.0,232.0 901.0,238.0 904.0,245.0 908.0,247.0 910.0,253.0 913.0,266.0 916.0,275.0 919.0,278.0 922.0,274.0 924.0,269.0 928.0,271.0 932.0,270.0 935.0,266.0 938.0,264.0 941.0,272.0 945.0,273.0 950.0,280.0 952.0,285.0 957.0,288.0 963.0,289.0 966.0,288.0 968.0,278.0 972.0,276.0 978.0,280.0 981.0,285.0 984.0,294.0 987.0,300.0 991.0,297.0 995.0,299.0 999.0,296.0 1005.0,296.0 1008.0,300.0 1013.0,303.0 1017.0,303.0 1021.0,297.0 1027.0,290.0 1031.0,294.0 1036.0,291.0 1040.0,295.0 1048.0,296.0 1054.0,296.0 1055.0,292.0 1058.0,296.0 1062.0,307.0 1068.0,310.0 1075.0,306.0 1077.0,305.0 1081.0,309.0 1088.0,312.0 1093.0,318.0 1101.0,320.0 1104.0,321.0 1106.0,325.0 1110.0,327.0 1127.0,327.0 1131.0,334.0 1135.0,340.0 1139.0,346.0 1144.0,350.0 1145.0,355.0 1150.0,358.0 1155.0,360.0 1158.0,364.0 1162.0,366.0 1167.0,367.0 1169.0,372.0 1173.0,375.0 1176.0,380.0 1180.0,382.5 1189.0,382.5 1192.0,389.0 1195.0,391.0 1200.0,391.0 1203.0,396.0 1208.0,398.5 1222.0,398.5 1225.0,403.0 1230.0,407.0 1236.0,407.5 1240.0,402.0 1245.0,400.0 1249.0,398.0 1254.0,393.0 1259.0,391.5 1269.0,391.5 1272.0,396.0 1276.0,399.0 1280.0,395.0 1285.0,392.5 1309.0,392.5 1312.0,388.0 1318.0,384.0 1321.0,384.0" fill="none" stroke="#ff0000" stroke-width="2" stroke-linejoin="round"/>
<polyline points="151.0,120.0 160.0,120.0 161.0,122.0 165.0,126.0 168.0,126.0 172.0,121.0 176.0,121.0 177.0,120.0 248.0,120.0 252.0,114.0 257.0,117.0 264.5,113.0 278.5,113.0 280.7,109.7 285.5,111.5 295.0,106.0 307.8,106.0 309.0,107.5 311.0,106.0 406.4,106.0 407.0,104.0 415.4,104.0 416.0,106.0 460.0,106.0 467.0,99.0 514.5,99.0 524.0,91.3 537.0,91.3 541.0,86.0 545.0,84.0 622.4,84.0 625.0,89.0 630.0,90.5 634.0,91.0 637.0,94.6 641.0,97.0 644.0,103.0 647.0,109.5 652.0,116.0 654.5,120.0 656.5,124.0 660.0,135.0 663.0,143.0 665.0,155.0 668.0,168.0 671.0,175.0 673.0,185.0 676.0,190.0 678.0,198.0 681.0,205.0 683.0,213.0 686.0,218.0 689.0,224.0 691.0,232.0 693.0,252.0 695.0,262.0 696.0,271.0 698.0,277.0 702.0,274.0 705.0,279.0 707.0,285.0 709.0,296.0 711.0,301.0 715.0,304.0 717.0,309.0 721.0,301.0 725.0,307.0 728.0,314.0 733.0,314.0 736.0,320.0 740.0,333.0 743.0,338.0 747.0,341.0 750.0,350.0 752.0,355.0 757.0,356.0 760.0,358.0 763.0,361.0 764.0,367.0 769.0,367.0 772.0,361.0 775.0,358.0 778.0,350.0 780.0,350.0 783.0,361.0 786.0,368.0 790.0,366.0 793.0,364.0 795.0,358.0 798.0,360.0 800.0,370.0 803.0,368.0 808.0,372.0 810.0,377.0 815.0,378.0 818.0,376.0 821.0,373.0 823.0,372.0 824.0,381.0 827.0,383.0 829.0,400.0 832.0,399.0 834.0,405.0 837.0,403.0 838.0,398.0 840.0,395.0 843.0,392.0 847.0,386.0 849.0,381.0 853.0,379.0 857.0,379.0 860.0,381.0 864.0,377.0 868.0,374.0 873.0,367.0 876.0,362.0 880.0,361.0 884.0,363.0 886.0,358.0 889.0,357.0 895.0,358.0 897.0,362.0 900.0,366.0 903.0,368.0 907.0,367.0 910.0,363.0 915.0,360.0 917.0,353.0 920.0,345.0 923.0,336.0 925.0,330.0 930.0,324.0 933.0,318.0 937.0,313.0 941.0,309.0 944.0,307.5 948.0,307.0 952.0,302.0 955.0,298.0 957.0,294.0 959.0,290.0 963.0,288.0 966.0,283.0 970.0,280.0 973.0,284.0 976.0,286.0 979.0,286.0 982.0,291.0 985.0,291.0 990.0,286.0 994.0,281.0 998.0,279.0 1003.0,274.0 1008.0,272.0 1017.0,270.0 1022.0,264.0 1024.0,263.0 1037.0,264.0 1039.0,261.0 1042.0,263.0 1047.0,264.0 1057.0,264.0 1061.0,261.0 1063.0,259.0 1068.0,256.0 1072.0,255.5 1075.0,252.0 1078.0,250.0 1084.0,249.5 1104.0,250.0 1107.0,254.0 1110.0,255.0 1112.0,252.0 1117.0,250.0 1120.0,246.0 1125.0,243.0 1133.0,243.0 1134.0,246.0 1137.0,247.5 1139.0,245.0 1143.0,248.5 1146.0,247.0 1150.0,249.0 1157.0,249.0 1159.0,245.0 1164.0,243.0 1170.0,242.0 1173.0,238.0 1176.0,233.5 1181.0,229.5 1188.0,228.0 1191.0,223.0 1197.0,221.0 1206.0,221.0 1211.0,215.0 1215.0,209.0 1219.0,207.0 1225.0,207.0 1231.0,205.0 1236.0,199.0 1238.0,194.0 1243.0,193.0 1248.0,188.0 1253.0,185.0 1259.0,183.0 1266.0,178.0 1270.0,172.0 1276.0,170.0 1281.0,165.0 1288.0,163.0 1291.0,158.0 1297.0,156.0 1307.0,155.5 1311.0,151.0 1317.0,149.0 1321.0,149.0" fill="none" stroke="#804000" stroke-width="2" stroke-linejoin="round"/>
</g>
<rect x="151" y="767" width="1170" height="1" fill="#00e0ff"/>
<rect x="151" y="768" width="1170" height="1" fill="#808080"/>
<rect x="150" y="47" width="2" height="722" fill="#808080"/>
<rect x="1320" y="47" width="2" height="722" fill="#808080"/>
<rect x="150" y="47" width="1172" height="2" fill="#808080"/>
<rect x="354" y="764" width="2" height="13" fill="#808080"/>
<rect x="439" y="764" width="2" height="13" fill="#ffff00"/>
<rect x="1181" y="764" width="2" height="13" fill="#ffff00"/>
<text transform="translate(11,798) scale(0.85,1.0)" font-size="12.5" fill="#000" text-anchor="start" font-weight="normal">15:14</text>
<path d="M40,797 L40,793 L42,793 L42,791 L47,791 L47,793 L49,793 L49,797 Z" fill="#ffff00"/>
<text transform="translate(362,798) scale(0.85,1.0)" font-size="12.5" fill="#000" text-anchor="start" font-weight="normal">04:10</text>
<path d="M355,798 L358,790 L361,798 Z" fill="#f0e000"/>
<rect x="349" y="788" width="5" height="5" fill="none" stroke="#4040c0" stroke-width="0.7" stroke-dasharray="1 1"/>
<text transform="translate(407,798) scale(0.85,1.0)" font-size="12.5" fill="#000" text-anchor="start" font-weight="normal">05:55</text>
<circle cx="440.5" cy="793.5" r="3.5" fill="#ffff00"/>
<text transform="translate(1149,798) scale(0.85,1.0)" font-size="12.5" fill="#000" text-anchor="start" font-weight="normal">21:09</text>
<path d="M1179,790 L1185,790 L1182,798 Z" fill="#f0e000"/>
<text transform="translate(1190,798) scale(0.85,1.0)" font-size="12.5" fill="#000" text-anchor="start" font-weight="normal">21:10</text>
<rect x="1" y="800" width="1430" height="90" fill="#ff8000"/>
<rect x="1431" y="800" width="1" height="131" fill="#a0a0a0"/>
<rect x="87" y="800" width="1" height="90" fill="#f0f4ff"/>
<rect x="204" y="800" width="1" height="90" fill="#f0f4ff"/>
<rect x="322" y="800" width="1" height="90" fill="#f0f4ff"/>
<rect x="440" y="800" width="1" height="90" fill="#f0f4ff"/>
<rect x="558" y="800" width="1" height="90" fill="#f0f4ff"/>
<rect x="676" y="800" width="1" height="90" fill="#f0f4ff"/>
<rect x="794" y="800" width="1" height="90" fill="#f0f4ff"/>
<rect x="912" y="800" width="1" height="90" fill="#f0f4ff"/>
<rect x="0" y="890" width="1432" height="1" fill="#a0a0a0"/>
<rect x="0" y="891" width="1432" height="1" fill="#ffffff"/>
<rect x="0" y="892" width="1432" height="1" fill="#b8b8b8"/>
<rect x="0" y="929" width="1432" height="1" fill="#ffffff"/>
<rect x="0" y="930" width="1432" height="1" fill="#a0a0a0"/>
<rect x="1" y="893" width="86" height="36" fill="#2de31a"/>
<rect x="87" y="891" width="1" height="39" fill="#ffffff"/>
<rect x="88" y="891" width="1" height="39" fill="#b0b0b0"/>
<rect x="89" y="893" width="115" height="36" fill="#2de31a"/>
<rect x="204" y="891" width="1" height="39" fill="#ffffff"/>
<rect x="205" y="891" width="1" height="39" fill="#b0b0b0"/>
<rect x="206" y="893" width="116" height="36" fill="#2de31a"/>
<rect x="322" y="891" width="1" height="39" fill="#ffffff"/>
<rect x="323" y="891" width="1" height="39" fill="#b0b0b0"/>
<rect x="324" y="893" width="116" height="36" fill="#2de31a"/>
<rect x="440" y="891" width="1" height="39" fill="#ffffff"/>
<rect x="441" y="891" width="1" height="39" fill="#b0b0b0"/>
<rect x="442" y="893" width="116" height="36" fill="#2de31a"/>
<rect x="558" y="891" width="1" height="39" fill="#ffffff"/>
<rect x="559" y="891" width="1" height="39" fill="#b0b0b0"/>
<rect x="560" y="893" width="870" height="36" fill="#2de31a"/>
<rect x="1430" y="891" width="1" height="39" fill="#ffffff"/>
<rect x="1431" y="891" width="1" height="39" fill="#b0b0b0"/>
<rect x="0" y="891" width="1" height="39" fill="#ffffff"/>
<rect x="562" y="894" width="34" height="34" fill="#4a9ad2"/>
<rect x="562" y="894" width="34" height="1" fill="#101830"/><rect x="562" y="894" width="1" height="34" fill="#101830"/>
<g shape-rendering="auto"><circle cx="575" cy="906" r="5" fill="#d8e850"/><ellipse cx="578" cy="912" rx="12" ry="4" fill="#eef4f4"/><ellipse cx="584" cy="921" rx="7" ry="2.5" fill="#e8f0f4"/></g>
<text x="8" y="818" font-size="11" fill="#000" text-anchor="start" font-weight="bold" letter-spacing="0.35">Sensor</text>
<text x="8" y="834" font-size="11" fill="#000" text-anchor="start" font-weight="bold" letter-spacing="0.35">MinWert</text>
<text x="8" y="850" font-size="11" fill="#000" text-anchor="start" font-weight="bold" letter-spacing="0.35">MaxWert</text>
<text x="8" y="866" font-size="11" fill="#000" text-anchor="start" font-weight="bold" letter-spacing="0.35">Durchschnitt</text>
<text x="8" y="882" font-size="11" fill="#000" text-anchor="start" font-weight="bold" letter-spacing="0.35">03.08. 23:59</text>
<text x="95" y="818" font-size="11" fill="#000" text-anchor="start" font-weight="bold" letter-spacing="0.35">Temp. 2m</text>
<text x="199" y="818" font-size="11" fill="#000" text-anchor="end" font-weight="bold" letter-spacing="0.35">°C</text>
<text x="100" y="834" font-size="11" fill="#000" text-anchor="start" font-weight="normal">06:22</text>
<text x="198" y="834" font-size="11" fill="#000" text-anchor="end" font-weight="normal">12.2</text>
<text x="101" y="850" font-size="11" fill="#000" text-anchor="start" font-weight="normal">13:51</text>
<text x="198" y="850" font-size="11" fill="#000" text-anchor="end" font-weight="normal">26.9</text>
<text x="198" y="866" font-size="11" fill="#000" text-anchor="end" font-weight="normal">19.10</text>
<text x="96" y="882" font-size="11" fill="#000" text-anchor="start" font-weight="normal">F: 86 %</text>
<text x="199" y="882" font-size="11" fill="#000" text-anchor="end" font-weight="bold" letter-spacing="0.35">17.3</text>
<text x="212" y="818" font-size="11" fill="#000" text-anchor="start" font-weight="bold" letter-spacing="0.35">Temp. 5cm</text>
<text x="317" y="818" font-size="11" fill="#000" text-anchor="end" font-weight="bold" letter-spacing="0.35">°C</text>
<text x="218" y="834" font-size="11" fill="#000" text-anchor="start" font-weight="normal">04:48</text>
<text x="316" y="834" font-size="11" fill="#000" text-anchor="end" font-weight="normal">10.6</text>
<text x="219" y="850" font-size="11" fill="#000" text-anchor="start" font-weight="normal">13:42</text>
<text x="316" y="850" font-size="11" fill="#000" text-anchor="end" font-weight="normal">39.1</text>
<text x="316" y="866" font-size="11" fill="#000" text-anchor="end" font-weight="normal">19.56</text>
<text x="317" y="882" font-size="11" fill="#000" text-anchor="end" font-weight="bold" letter-spacing="0.35">16.7</text>
<text x="330" y="818" font-size="11" fill="#000" text-anchor="start" font-weight="bold" letter-spacing="0.35">Feuchte A.</text>
<text x="435" y="818" font-size="11" fill="#000" text-anchor="end" font-weight="bold" letter-spacing="0.35">%</text>
<text x="337" y="834" font-size="11" fill="#000" text-anchor="start" font-weight="normal">14:02</text>
<text x="434" y="834" font-size="11" fill="#000" text-anchor="end" font-weight="normal">48</text>
<text x="335" y="850" font-size="11" fill="#000" text-anchor="start" font-weight="normal">07:56</text>
<text x="434" y="850" font-size="11" fill="#000" text-anchor="end" font-weight="normal">95</text>
<text x="434" y="866" font-size="11" fill="#000" text-anchor="end" font-weight="normal">79</text>
<text x="334" y="882" font-size="11" fill="#000" text-anchor="start" font-weight="normal">12.69 g/m³</text>
<text x="435" y="882" font-size="11" fill="#000" text-anchor="end" font-weight="bold" letter-spacing="0.35">86</text>
<text x="448" y="818" font-size="11" fill="#000" text-anchor="start" font-weight="bold" letter-spacing="0.35">Regen</text>
<text x="553" y="818" font-size="11" fill="#000" text-anchor="end" font-weight="bold" letter-spacing="0.35">l/m²</text>
<text x="454" y="850" font-size="11" fill="#000" text-anchor="start" font-weight="normal">00:00</text>
<text x="552" y="850" font-size="11" fill="#000" text-anchor="end" font-weight="normal">0.0</text>
<text x="448" y="866" font-size="11" fill="#000" text-anchor="start" font-weight="normal">Gesamt:</text>
<text x="552" y="866" font-size="11" fill="#000" text-anchor="end" font-weight="normal">0.0</text>
<text x="451" y="882" font-size="11" fill="#000" text-anchor="start" font-weight="normal">0.0 l/m²</text>
<text x="553" y="882" font-size="11" fill="#000" text-anchor="end" font-weight="bold" letter-spacing="0.35">0.0</text>
<text x="566" y="818" font-size="11" fill="#000" text-anchor="start" font-weight="bold" letter-spacing="0.35">Luftdruck</text>
<text x="670" y="818" font-size="11" fill="#000" text-anchor="end" font-weight="bold" letter-spacing="0.35">hPa</text>
<text x="573" y="834" font-size="11" fill="#000" text-anchor="start" font-weight="normal">17:29</text>
<text x="670" y="834" font-size="11" fill="#000" text-anchor="end" font-weight="normal">1009.9</text>
<text x="572" y="850" font-size="11" fill="#000" text-anchor="start" font-weight="normal">23:49</text>
<text x="670" y="850" font-size="11" fill="#000" text-anchor="end" font-weight="normal">1012.2</text>
<text x="567" y="866" font-size="11" fill="#000" text-anchor="start" font-weight="normal">^1.1hPa/h</text>
<text x="670" y="866" font-size="11" fill="#000" text-anchor="end" font-weight="normal">1010.6</text>
<text x="566" y="882" font-size="11" fill="#000" text-anchor="start" font-weight="normal">bewölkt</text>
<rect x="624" y="872" width="8" height="13" fill="#eef4ff"/>
<path d="M628,873.5 L624.8,878 L627.2,878 L627.2,884 L628.8,884 L628.8,878 L631.2,878 Z" fill="#000"/>
<text x="670" y="882" font-size="11" fill="#000" text-anchor="end" font-weight="bold" letter-spacing="0.35">1012.1</text>
<text x="684" y="818" font-size="11" fill="#000" text-anchor="start" font-weight="bold" letter-spacing="0.35">Sonnenschein</text>
<text x="789" y="818" font-size="11" fill="#000" text-anchor="end" font-weight="bold" letter-spacing="0.35">min</text>
<text x="690" y="850" font-size="11" fill="#000" text-anchor="start" font-weight="normal">06:08</text>
<text x="788" y="850" font-size="11" fill="#000" text-anchor="end" font-weight="normal">1</text>
<text x="684" y="866" font-size="11" fill="#000" text-anchor="start" font-weight="normal">4:12 h</text>
<text x="788" y="866" font-size="11" fill="#000" text-anchor="end" font-weight="normal">0</text>
<text x="789" y="882" font-size="11" fill="#000" text-anchor="end" font-weight="bold" letter-spacing="0.35">0</text>
<text x="802" y="818" font-size="11" fill="#000" text-anchor="start" font-weight="bold" letter-spacing="0.35">Windböen</text>
<text x="907" y="818" font-size="11" fill="#000" text-anchor="end" font-weight="bold" letter-spacing="0.35">km/h</text>
<text x="802" y="834" font-size="11" fill="#000" text-anchor="start" font-weight="normal">Ø 10 min.</text>
<text x="906" y="834" font-size="11" fill="#000" text-anchor="end" font-weight="normal">0.0</text>
<text x="809" y="850" font-size="11" fill="#000" text-anchor="start" font-weight="normal">18:20</text>
<text x="906" y="850" font-size="11" fill="#000" text-anchor="end" font-weight="normal">NW 11.2</text>
<text x="809" y="866" font-size="11" fill="#000" text-anchor="start" font-weight="normal">1.3 km</text>
<text x="906" y="866" font-size="11" fill="#000" text-anchor="end" font-weight="normal">0.1</text>
<text x="808" y="882" font-size="11" fill="#000" text-anchor="start" font-weight="normal">0 Bft - -</text>
<text x="907" y="882" font-size="11" fill="#000" text-anchor="end" font-weight="bold" letter-spacing="0.35">0.0</text>
<text x="920" y="818" font-size="11" fill="#000" text-anchor="start" font-weight="bold" letter-spacing="0.35">Wind</text>
<text x="1022" y="818" font-size="11" fill="#000" text-anchor="end" font-weight="bold" letter-spacing="0.35">km/h</text>
<text x="920" y="834" font-size="11" fill="#000" text-anchor="start" font-weight="normal">Ø 10 min.</text>
<text x="1021" y="834" font-size="11" fill="#000" text-anchor="end" font-weight="normal">0.0</text>
<text x="926" y="850" font-size="11" fill="#000" text-anchor="start" font-weight="normal">00:00</text>
<text x="1021" y="850" font-size="11" fill="#000" text-anchor="end" font-weight="normal">N-NW 0.0</text>
<text x="927" y="866" font-size="11" fill="#000" text-anchor="start" font-weight="normal">1.3 km</text>
<text x="1021" y="866" font-size="11" fill="#000" text-anchor="end" font-weight="normal">0.0</text>
<text x="926" y="882" font-size="11" fill="#000" text-anchor="start" font-weight="normal">0 Bft W</text>
<text x="1022" y="882" font-size="11" fill="#000" text-anchor="end" font-weight="bold" letter-spacing="0.35">0.0</text>
<text x="8" y="907" font-size="11" fill="#000" text-anchor="start" font-weight="normal">Wetterdaten</text>
<text x="8" y="923" font-size="11" fill="#000" text-anchor="start" font-weight="normal">03.08.24 23:59</text>
<text x="94" y="907" font-size="11" fill="#000" text-anchor="start" font-weight="normal">Temp. I.</text>
<text x="198" y="907" font-size="11" fill="#000" text-anchor="end" font-weight="normal">26.1 °C</text>
<text x="94" y="923" font-size="11" fill="#000" text-anchor="start" font-weight="normal">Feuchte I.</text>
<text x="198" y="923" font-size="11" fill="#000" text-anchor="end" font-weight="normal">54 %</text>
<text x="210" y="907" font-size="11" fill="#000" text-anchor="start" font-weight="normal">Temp. 2m</text>
<text x="314" y="907" font-size="11" fill="#000" text-anchor="end" font-weight="normal">17.3 °C</text>
<text x="210" y="923" font-size="11" fill="#000" text-anchor="start" font-weight="normal">Feuchte A.</text>
<text x="314" y="923" font-size="11" fill="#000" text-anchor="end" font-weight="normal">86 %</text>
<text x="329" y="907" font-size="11" fill="#000" text-anchor="start" font-weight="normal">Luftdruck</text>
<text x="434" y="907" font-size="11" fill="#000" text-anchor="end" font-weight="normal">1012.1 hPa</text>
<text x="329" y="923" font-size="11" fill="#000" text-anchor="start" font-weight="normal">Regen</text>
<text x="434" y="923" font-size="11" fill="#000" text-anchor="end" font-weight="normal">0.0 l/m²</text>
<text x="447" y="907" font-size="11" fill="#000" text-anchor="start" font-weight="normal">Wind</text>
<text x="552" y="907" font-size="11" fill="#000" text-anchor="end" font-weight="normal">0.0 km/h</text>
<text x="447" y="923" font-size="11" fill="#000" text-anchor="start" font-weight="normal">Richtung</text>
<text x="552" y="923" font-size="11" fill="#000" text-anchor="end" font-weight="normal">W</text>
<text x="1100" y="907" font-size="11" fill="#000" text-anchor="start" font-weight="normal">WR 264°</text>
<text x="1100" y="923" font-size="11" fill="#000" text-anchor="start" font-weight="normal">WC 17.3°C</text>
<text x="1170" y="907" font-size="11" fill="#000" text-anchor="start" font-weight="normal">Solar</text>
<text x="1170" y="923" font-size="11" fill="#000" text-anchor="start" font-weight="normal">ET</text>
<text x="1285" y="907" font-size="11" fill="#000" text-anchor="end" font-weight="normal">0 W/m²</text>
<text x="1276" y="923" font-size="11" fill="#000" text-anchor="end" font-weight="normal">0.000 mm</text>
<text x="1309" y="907" font-size="11" fill="#000" text-anchor="start" font-weight="normal">UV</text>
<text x="1309" y="923" font-size="11" fill="#000" text-anchor="start" font-weight="normal">Taupunkt</text>
<text x="1425" y="907" font-size="11" fill="#000" text-anchor="end" font-weight="normal">0.0 UV-I</text>
<text x="1416" y="923" font-size="11" fill="#000" text-anchor="end" font-weight="normal">14.9 °C</text>
</svg></body></html>
